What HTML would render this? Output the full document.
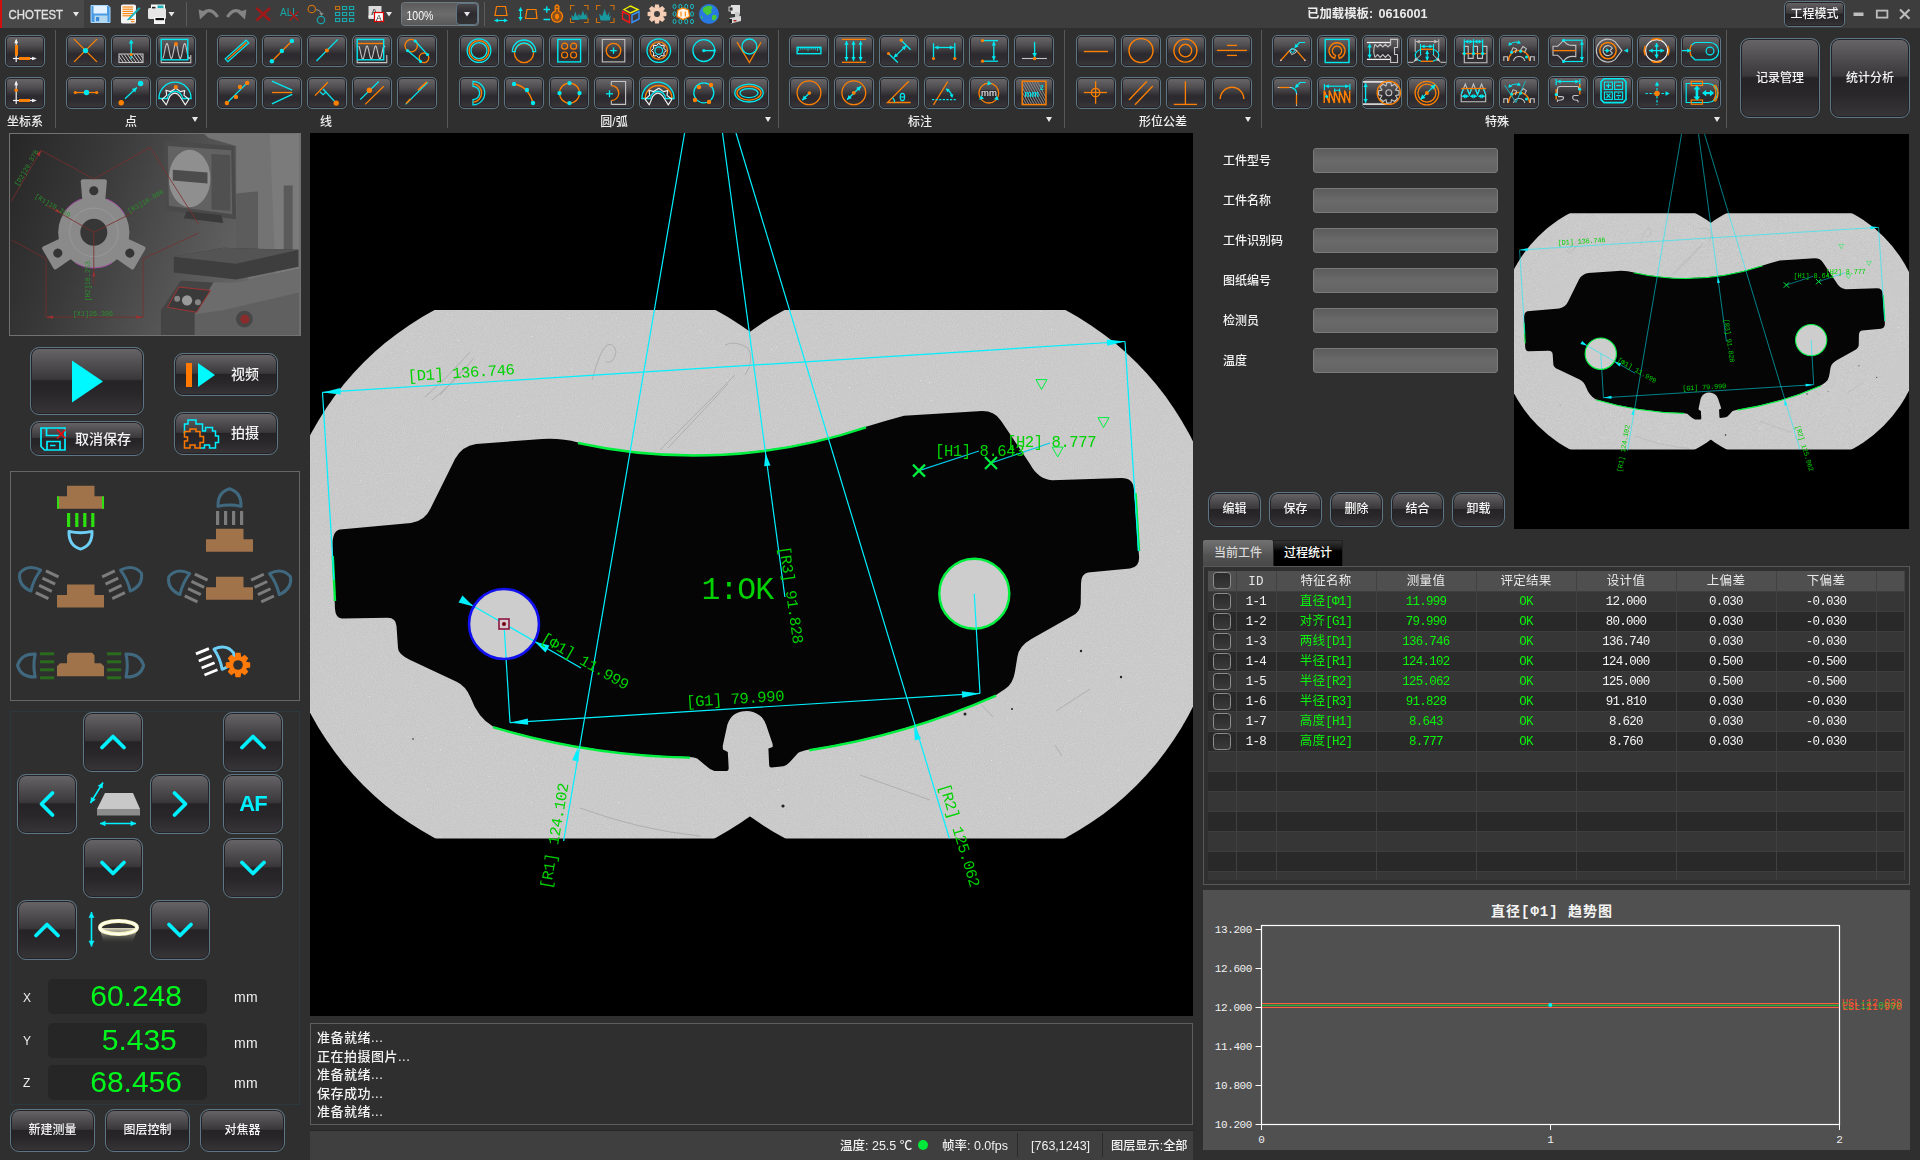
<!DOCTYPE html>
<html lang="zh"><head><meta charset="utf-8"><title>CHOTEST</title><style>
*{box-sizing:border-box}
html,body{margin:0;padding:0}
body{width:1920px;height:1160px;overflow:hidden;background:#2f2f2f;color:#eee;font-family:"Liberation Sans","Noto Sans CJK SC",sans-serif;font-size:12px;position:relative;font-weight:500}
.a{position:absolute}
#title{left:0;top:0;width:1920px;height:28px;background:#3d3d3d}
.tb{position:absolute;width:40px;height:32px;border:1px solid #5d7685;border-radius:5px;background:linear-gradient(#6a686a 0%,#514f51 30%,#3b393c 48%,#2c2a2e 60%,#2e2c30 75%,#3a383b 100%);box-shadow:inset 0 0 0 1px #252325}
.tb svg{position:absolute;left:-1px;top:-1px;width:40px;height:32px;overflow:visible}
.sep{position:absolute;width:1px;top:30px;height:98px;background:#585858}
.glab{position:absolute;top:114px;height:16px;line-height:16px;font-size:12px;color:#f0f0f0;text-align:center;white-space:nowrap}
.dd{position:absolute;top:117px;width:0;height:0;border-left:3px solid transparent;border-right:3px solid transparent;border-top:5px solid #e8e8e8}
.gb{position:absolute;border:1px solid #5d7685;border-radius:9px;background:linear-gradient(#676567 0%,#4a484a 30%,#3a383b 47%,#252326 50%,#29272a 70%,#373538 100%);box-shadow:inset 0 0 0 1px #242224;color:#f4f4f4;text-align:center;white-space:nowrap}
.inp{position:absolute;left:1313px;width:185px;height:25px;border:1px solid #7a7a7a;border-radius:3px;background:linear-gradient(#5c5c5c,#6a6a6a 50%,#646464)}
.flab{position:absolute;left:1223px;font-size:12px;color:#f2f2f2;height:16px;line-height:16px}
.mono{font-family:"Liberation Mono","Noto Sans Mono CJK SC","Noto Sans CJK SC",monospace}
.cb{position:absolute;left:5px;top:0.5px;width:17.5px;height:17.5px;border:1.2px solid #8c8c8c;border-radius:3.5px;background:linear-gradient(#2a2a2a,#3a3a3a)}


.th{position:absolute;top:0;height:21px;line-height:22.5px;text-align:center;font-size:12.5px;color:#e8e8e8;white-space:nowrap;letter-spacing:0.3px}
.tr{position:absolute;left:0;width:697px;height:20px;border-bottom:1px solid #3e3e3e}
.tc{position:absolute;top:0;height:20px;line-height:21px;text-align:center;font-size:12.5px;white-space:nowrap;color:#f4f4f4;letter-spacing:-0.75px}
.cj{letter-spacing:0.2px}
.g{color:#0cf20c}
</style></head><body>
<div id="title" class="a"></div>
<svg class="a" style="left:0;top:0" width="1920" height="28" viewBox="0 0 1920 28"><rect x="0" y="0" width="2" height="28" fill="#d01010"/><rect x="2" y="0" width="82" height="28" fill="#494949"/><text x="8.6" y="18.7" font-size="13.6" fill="#e0e0e0" stroke="#e0e0e0" stroke-width="0.35" font-family="Liberation Sans,Noto Sans CJK SC,sans-serif" textLength="54.5" lengthAdjust="spacingAndGlyphs">CHOTEST</text><polygon points="73,12 79,12 76.0,16.5" fill="#e8e8e8"/><g><path d="M91 5.5 H108 L110 7.5 V22.5 H91 Z" fill="#4a9ae4" stroke="#a8d8ff" stroke-width="1"/><rect x="93.5" y="6" width="13.5" height="7.5" fill="#e4f2ff"/><rect x="94.5" y="15.5" width="13" height="7" fill="#b4d8ee"/><rect x="96" y="17" width="3.2" height="4.2" fill="#3a88d8"/></g><g><path d="M121 6 Q121 4.5 123 4.5 H134 Q136 4.5 136 6 V22 Q136 23.5 134 23.5 H123 Q121 23.5 121 22 Z" fill="#f4f4f4"/><line x1="122.5" y1="7.0" x2="133" y2="7.0" stroke="#ff8000" stroke-width="1.1"/><line x1="122.5" y1="9.2" x2="133" y2="9.2" stroke="#ff8000" stroke-width="1.1"/><line x1="122.5" y1="11.4" x2="133" y2="11.4" stroke="#ff8000" stroke-width="1.1"/><line x1="122.5" y1="13.600000000000001" x2="133" y2="13.600000000000001" stroke="#ff8000" stroke-width="1.1"/><line x1="122.5" y1="15.8" x2="133" y2="15.8" stroke="#ff8000" stroke-width="1.1"/><line x1="130" y1="19.5" x2="134.5" y2="19.5" stroke="#ff8000" stroke-width="1.1"/><line x1="131" y1="21.7" x2="134.5" y2="21.7" stroke="#ff8000" stroke-width="1.1"/><path d="M139 7.5 L128.5 18.5 L127.5 20 L129.5 19.3 L140 8.5 Z" fill="#10c0c8" stroke="#10a8b0" stroke-width="0.8"/></g><g><rect x="151" y="4.5" width="14" height="6" fill="#fafafa"/><rect x="148" y="8" width="18" height="11" rx="1.5" fill="#e6e6e6"/><rect x="157.5" y="5.5" width="6" height="2.6" fill="#18b0b8"/><rect x="152" y="6.8" width="3.5" height="1.6" fill="#222"/><rect x="154" y="17" width="11" height="7" fill="#f4f4f4"/><rect x="155.5" y="18" width="8.5" height="2.2" fill="#111"/></g><polygon points="168.5,12 174.5,12 171.5,16.5" fill="#e8e8e8"/><rect x="186" y="2" width="1" height="24" fill="#5c5c5c"/><g fill="none" stroke="#848484" stroke-width="3.2"><path d="M217.6 17 Q211 6.5 202.5 13.5"/><path d="M227.4 17 Q234 6.5 242.5 13.5"/></g><polygon points="198.6,9.6 207.6,12.6 200,19.4" fill="#848484"/><polygon points="246.4,9.6 237.4,12.6 245,19.4" fill="#848484"/><path d="M256.5 8 L270 20.5 M270 8 L256.5 20.5" stroke="#a01818" stroke-width="2.6" fill="none"/><text x="280" y="15.5" font-size="11" fill="#18a8a8" font-family="Liberation Sans,Noto Sans CJK SC,sans-serif" textLength="18" lengthAdjust="spacingAndGlyphs">ALL</text><path d="M289.5 11.5 L298.5 20.5 M298.5 11.5 L289.5 20.5" stroke="#b01818" stroke-width="1.3"/><circle cx="311.8" cy="9" r="3.7" fill="none" stroke="#c87010" stroke-width="1.2"/><circle cx="321" cy="20" r="3.7" fill="none" stroke="#18a8b0" stroke-width="1.2"/><path d="M316 9.5 Q321 10.5 321.5 14.5" fill="none" stroke="#8a8a8a" stroke-width="1.1"/><polygon points="319.3,13 323.6,13 321.5,16" fill="#8a8a8a"/><rect x="335.5" y="6.5" width="4.2" height="3" fill="none" stroke="#c87010" stroke-width="1.1"/><rect x="342.5" y="6.5" width="4.2" height="3" fill="none" stroke="#18a8b0" stroke-width="1.1"/><rect x="349.5" y="6.5" width="4.2" height="3" fill="none" stroke="#18a8b0" stroke-width="1.1"/><rect x="335.5" y="12.5" width="4.2" height="3" fill="none" stroke="#18a8b0" stroke-width="1.1"/><rect x="342.5" y="12.5" width="4.2" height="3" fill="none" stroke="#18a8b0" stroke-width="1.1"/><rect x="349.5" y="12.5" width="4.2" height="3" fill="none" stroke="#18a8b0" stroke-width="1.1"/><rect x="335.5" y="18.5" width="4.2" height="3" fill="none" stroke="#18a8b0" stroke-width="1.1"/><rect x="342.5" y="18.5" width="4.2" height="3" fill="none" stroke="#18a8b0" stroke-width="1.1"/><rect x="349.5" y="18.5" width="4.2" height="3" fill="none" stroke="#18a8b0" stroke-width="1.1"/><rect x="368.5" y="6" width="13" height="13" fill="#dcdcdc"/><text x="371" y="14.5" font-size="9" fill="#555" font-family="Liberation Sans,Noto Sans CJK SC,sans-serif" font-weight="bold">A</text><rect x="368.5" y="15.5" width="13" height="2" fill="#f4f4f4"/><rect x="374.5" y="12.5" width="9" height="9" fill="#fff" stroke="#e00000" stroke-width="1.2"/><text x="376" y="20.6" font-size="8.5" fill="#222" font-family="Liberation Sans,Noto Sans CJK SC,sans-serif">A</text><polygon points="386,12 392,12 389.0,16.5" fill="#e8e8e8"/><defs><linearGradient id="cbg" x1="0" y1="0" x2="0" y2="1"><stop offset="0" stop-color="#5a5a5a"/><stop offset="0.5" stop-color="#6c6c6c"/><stop offset="1" stop-color="#585858"/></linearGradient><linearGradient id="cbd" x1="0" y1="0" x2="0" y2="1"><stop offset="0" stop-color="#4a484a"/><stop offset="0.5" stop-color="#2c2a2e"/><stop offset="1" stop-color="#333"/></linearGradient></defs><rect x="401.5" y="2.5" width="77" height="23" rx="3" fill="url(#cbg)" stroke="#707c84" stroke-width="1"/><rect x="456.5" y="3.5" width="21" height="21" rx="3" fill="url(#cbd)" stroke="#5d7685" stroke-width="1"/><text x="406.5" y="19.6" font-size="13" fill="#fafafa" font-family="Liberation Sans,Noto Sans CJK SC,sans-serif" textLength="27" lengthAdjust="spacingAndGlyphs">100%</text><polygon points="464,12 470,12 467.0,16.5" fill="#e8e8e8"/><rect x="484" y="2" width="1" height="24" fill="#5c5c5c"/><path d="M496.5 6.5 H505.5 L507 15.5 H495 Z" fill="none" stroke="#ff8000" stroke-width="1.2"/><line x1="494.6" y1="20.5" x2="507.4" y2="20.5" stroke="#00e8f0" stroke-width="1.2" /><polygon points="507.40,20.50 504.10,22.45 504.10,18.55" fill="#00e8f0"/><polygon points="494.60,20.50 497.90,18.55 497.90,22.45" fill="#00e8f0"/><line x1="520.5" y1="7.5" x2="520.5" y2="20.5" stroke="#00e8f0" stroke-width="1.3" /><polygon points="520.50,20.50 518.30,16.96 522.70,16.96" fill="#00e8f0"/><polygon points="520.50,7.50 522.70,11.04 518.30,11.04" fill="#00e8f0"/><path d="M527 9.5 H536 L537 18.5 H525.5 Z" fill="none" stroke="#ff8000" stroke-width="1.2"/><path d="M543.5 9.5 H550 M546.8 6.3 V12.7 M543.5 19.5 H550" stroke="#00e8f0" stroke-width="1.3" fill="none"/><path d="M555.2 11.2 V6.4 Q557 3.6 558.8 6.4 V11.2 A5.6 5.6 0 1 1 555.2 11.2 Z" fill="#c86008" fill-opacity="0.55" stroke="#ff8000" stroke-width="1.3"/><ellipse cx="557" cy="16.6" rx="2" ry="2.8" fill="#ff8000"/><path d="M555.4 8.6 H558.6" stroke="#ff8000" stroke-width="1"/><path d="M574.5 5.5 H570.5 V10 M570.5 18 V22.5 H574.5 M584 5.5 H588 V10 M588 18 V22.5 H584" fill="none" stroke="#c87010" stroke-width="1.1"/><path d="M572.1560000000001 20 L571.172 14.916 L573.4680000000001 16.884 L575.272 11.39 L577.076 16.392 L579.044 13.440000000000001 L578.552 17.54 L580.192 15.9 L579.208 20 Z" fill="#1a98a0"/><path d="M579.7560000000001 19.2 L578.772 14.116 L581.0680000000001 16.084 L582.8720000000001 10.59 L584.676 15.591999999999999 L586.644 12.64 L586.152 16.74 L587.792 15.1 L586.808 19.2 Z" fill="#1a98a0"/><path d="M600.5 5.5 H596.5 V10 M596.5 18 V22.5 H600.5 M610 5.5 H614 V10 M614 18 V22.5 H610" fill="none" stroke="#c87010" stroke-width="1.1"/><path d="M600.464 20.4 L599.168 13.703999999999997 L602.192 16.296 L604.568 9.059999999999999 L606.944 15.647999999999998 L609.536 11.759999999999998 L608.888 17.159999999999997 L611.048 14.999999999999998 L609.752 20.4 Z" fill="#1a98a0"/><g fill="none" stroke-width="1.4"><path d="M624 9.5 L630.5 6 L638 9.5 L630.5 13 Z" stroke="#f0f000"/><path d="M622.5 11.5 L629.5 15 V22.5 L622.5 19 Z" stroke="#f01818"/><path d="M639 11.5 L632 15 V22.5 L639 19 Z" stroke="#3890f8"/></g><polygon points="663.3,11.5 666.4,12.1 666.4,15.9 663.3,16.5 663.2,16.7 665.0,19.3 662.3,22.0 659.7,20.2 659.5,20.3 658.9,23.4 655.1,23.4 654.5,20.3 654.3,20.2 651.7,22.0 649.0,19.3 650.8,16.7 650.7,16.5 647.6,15.9 647.6,12.1 650.7,11.5 650.8,11.3 649.0,8.7 651.7,6.0 654.3,7.8 654.5,7.7 655.1,4.6 658.9,4.6 659.5,7.7 659.7,7.8 662.3,6.0 665.0,8.7 663.2,11.3" fill="#f4cdb4" stroke="#f8c8a8" stroke-width="0" stroke-linejoin="round"/><circle cx="657" cy="14" r="3" fill="#3d3d3d"/><ellipse cx="674.5" cy="6.5" rx="1.5" ry="2.2" fill="none" stroke="#18c8d0" stroke-width="0.9"/><ellipse cx="680.3" cy="6.5" rx="1.5" ry="2.2" fill="none" stroke="#18c8d0" stroke-width="0.9"/><ellipse cx="686.2" cy="6.5" rx="1.5" ry="2.2" fill="none" stroke="#18c8d0" stroke-width="0.9"/><ellipse cx="692" cy="6.5" rx="1.5" ry="2.2" fill="none" stroke="#18c8d0" stroke-width="0.9"/><ellipse cx="674.5" cy="14" rx="1.5" ry="2.2" fill="none" stroke="#18c8d0" stroke-width="0.9"/><ellipse cx="680.3" cy="14" rx="1.5" ry="2.2" fill="none" stroke="#18c8d0" stroke-width="0.9"/><ellipse cx="686.2" cy="14" rx="1.5" ry="2.2" fill="none" stroke="#18c8d0" stroke-width="0.9"/><ellipse cx="692" cy="14" rx="1.5" ry="2.2" fill="none" stroke="#18c8d0" stroke-width="0.9"/><ellipse cx="674.5" cy="21.5" rx="1.5" ry="2.2" fill="none" stroke="#18c8d0" stroke-width="0.9"/><ellipse cx="680.3" cy="21.5" rx="1.5" ry="2.2" fill="none" stroke="#18c8d0" stroke-width="0.9"/><ellipse cx="686.2" cy="21.5" rx="1.5" ry="2.2" fill="none" stroke="#18c8d0" stroke-width="0.9"/><ellipse cx="692" cy="21.5" rx="1.5" ry="2.2" fill="none" stroke="#18c8d0" stroke-width="0.9"/><polygon points="683,8 688.5,10 689.5,16.5 683,19.5 677,16.5 678,10" fill="#fff4e8" stroke="#ff8000" stroke-width="1.2"/><path d="M681 11.5 V16.5 M685.3 11.5 V16.5" stroke="#ff8000" stroke-width="1.1"/><circle cx="709" cy="14" r="10" fill="#2878e0"/><path d="M703 8 Q707 5 711 6 Q714 8 711 10 Q713 13 709.5 14 Q707 17 705 13 Q702 12 703 8 Z M713 15 Q717 14 716.5 18 Q715 21.5 712.5 20 Q711 17 713 15 Z M701 15 Q703 17 702.5 19.5 Q700.5 18 701 15 Z" fill="#48c838"/><g><rect x="731" y="5" width="9" height="9" fill="#e0e0e0"/><rect x="729" y="7" width="4" height="4" fill="#333" stroke="#eee" stroke-width="0.8"/><rect x="735" y="12" width="4.5" height="5" fill="#c8c8c8"/><path d="M729.5 18 L741 16 V21 L731 23.5 Z" fill="#d8d8d8"/><rect x="733.5" y="20" width="3" height="1.4" fill="#b02020"/><rect x="729" y="19" width="3" height="4" fill="#2a2a2a"/></g><text x="1307" y="17.8" font-size="12.4" font-weight="bold" fill="#ececec" font-family="Liberation Sans,Noto Sans CJK SC,sans-serif">已加载模板:</text><text x="1378.5" y="17.8" font-size="12.6" font-weight="bold" fill="#ececec" font-family="Liberation Sans,Noto Sans CJK SC,sans-serif">0616001</text><rect x="1853.5" y="12.5" width="10" height="3.5" fill="#bdbdbd"/><rect x="1876.8" y="10.6" width="10.6" height="7" fill="none" stroke="#bdbdbd" stroke-width="1.8"/><path d="M1900 9.5 L1909.5 18.8 M1909.5 9.5 L1900 18.8" stroke="#bdbdbd" stroke-width="2"/></svg><div class="gb" style="left:1784px;top:1px;width:61px;height:26px;line-height:24px;font-size:12px;border-radius:5px">工程模式</div>
<div class="tb" style="left:5px;top:35px"><svg viewBox="0 0 40 32"><line x1="11.2" y1="5" x2="11.2" y2="27" stroke="#f2f2f2" stroke-width="1.2" /><polygon points="11.20,3.50 13.03,8.22 9.37,8.22" fill="#f2f2f2"/><line x1="8" y1="23.5" x2="30" y2="23.5" stroke="#f2f2f2" stroke-width="1.2" /><polygon points="31.80,23.50 27.08,25.33 27.08,21.67" fill="#f2f2f2"/><rect x="10" y="10" width="3" height="10.6" fill="#ff8000" stroke="#ff8000" stroke-width="0"/><rect x="14" y="22" width="11" height="3" fill="#ff8000" stroke="#ff8000" stroke-width="0"/></svg></div>
<div class="tb" style="left:5px;top:77px"><svg viewBox="0 0 40 32"><line x1="11.2" y1="5" x2="11.2" y2="27" stroke="#f2f2f2" stroke-width="1.2" /><polygon points="11.20,3.50 13.03,8.22 9.37,8.22" fill="#f2f2f2"/><line x1="8" y1="23.5" x2="30" y2="23.5" stroke="#f2f2f2" stroke-width="1.2" /><polygon points="31.80,23.50 27.08,25.33 27.08,21.67" fill="#f2f2f2"/><circle cx="11.2" cy="13.2" r="1.8" fill="#ff8000"/><rect x="14" y="22" width="11" height="3" fill="#ff8000" stroke="#ff8000" stroke-width="0"/></svg></div>
<div class="tb" style="left:66px;top:35px"><svg viewBox="0 0 40 32"><line x1="8.1" y1="4.1" x2="30.9" y2="26.9" stroke="#ff8000" stroke-width="1.3" /><line x1="8.1" y1="26.9" x2="30.9" y2="4.1" stroke="#ff8000" stroke-width="1.3" /><circle cx="19.5" cy="15.6" r="2.7" fill="#00e8f0"/></svg></div>
<div class="tb" style="left:66px;top:77px"><svg viewBox="0 0 40 32"><line x1="9" y1="15.5" x2="31" y2="15.5" stroke="#ff8000" stroke-width="1.3" /><circle cx="9.3" cy="15.5" r="1.6" fill="#ff8000"/><circle cx="30.7" cy="15.5" r="1.6" fill="#ff8000"/><circle cx="20.5" cy="15.5" r="2.7" fill="#00e8f0"/></svg></div>
<div class="tb" style="left:111px;top:35px"><svg viewBox="0 0 40 32"><clipPath id="hc"><rect x="8" y="19" width="24" height="8.5"/></clipPath><g clip-path="url(#hc)"><line x1="12.2" y1="27.2" x2="6.699999999999999" y2="19.3" stroke="#c4c4c4" stroke-width="1" /><line x1="15.4" y1="27.2" x2="9.9" y2="19.3" stroke="#c4c4c4" stroke-width="1" /><line x1="18.6" y1="27.2" x2="13.100000000000001" y2="19.3" stroke="#c4c4c4" stroke-width="1" /><line x1="21.8" y1="27.2" x2="16.3" y2="19.3" stroke="#c4c4c4" stroke-width="1" /><line x1="25.0" y1="27.2" x2="19.5" y2="19.3" stroke="#c4c4c4" stroke-width="1" /><line x1="28.200000000000003" y1="27.2" x2="22.700000000000003" y2="19.3" stroke="#c4c4c4" stroke-width="1" /><line x1="31.400000000000002" y1="27.2" x2="25.900000000000002" y2="19.3" stroke="#c4c4c4" stroke-width="1" /><line x1="34.6" y1="27.2" x2="29.1" y2="19.3" stroke="#c4c4c4" stroke-width="1" /></g><rect x="8" y="19" width="24" height="8.5" fill="none" stroke="#c4c4c4" stroke-width="1.1"/><line x1="20.2" y1="23.8" x2="20.2" y2="7" stroke="#00e8f0" stroke-width="1.3" /><polygon points="20.20,4.20 22.52,8.45 17.88,8.45" fill="#00e8f0"/><circle cx="20.2" cy="19.4" r="1.5" fill="#ff8000"/></svg></div>
<div class="tb" style="left:111px;top:77px"><svg viewBox="0 0 40 32"><circle cx="10.2" cy="25.8" r="2.7" fill="#ff8000"/><circle cx="29.6" cy="6.5" r="2.7" fill="#00e8f0"/><line x1="14" y1="21.8" x2="25.9" y2="10.5" stroke="#00e8f0" stroke-width="1.3" /><polygon points="25.90,10.50 24.16,15.52 20.80,11.98" fill="#00e8f0"/></svg></div>
<div class="tb" style="left:156px;top:35px"><svg viewBox="0 0 40 32"><path d="M5.2 25 V27.6 H34.8 V20" fill="none" stroke="#c4c4c4" stroke-width="1.1" /><polyline points="6.5,23.5 7.0,23.1 7.4,22.0 7.9,20.2 8.3,18.0 8.8,15.6 9.2,13.2 9.7,11.2 10.2,9.6 10.6,8.7 11.1,8.5 11.5,9.2 12.0,10.5 12.5,12.5 12.9,14.7 13.4,17.2 13.8,19.5 14.3,21.4 14.8,22.8 15.2,23.5 15.7,23.3 16.1,22.5 16.6,20.9 17.0,18.8 17.5,16.5 18.0,14.1 18.4,11.8 18.9,10.1 19.3,8.9 19.8,8.5 20.2,8.9 20.7,10.0 21.2,11.7 21.6,13.9 22.1,16.3 22.5,18.7 23.0,20.8 23.5,22.4 23.9,23.3 24.4,23.5 24.8,22.9 25.3,21.5 25.8,19.6 26.2,17.3 26.7,14.9 27.1,12.6 27.6,10.6 28.0,9.2 28.5,8.6 29.0,8.6 29.4,9.5 29.9,11.0 30.3,13.1 30.8,15.5 31.2,17.9 31.7,20.1 32.2,21.9 32.6,23.1 33.1,23.5 33.5,23.2 34.0,22.1" fill="none" stroke="#c4c4c4" stroke-width="1.1"/><rect x="5.2" y="4.4" width="26.6" height="20.4" fill="none" stroke="#00e8f0" stroke-width="1.4"/><circle cx="20" cy="9" r="1.9" fill="#ff8000"/></svg></div>
<div class="tb" style="left:156px;top:77px"><svg viewBox="0 0 40 32"><g transform="translate(0 0)"><path d="M2.9 21.5 A16.1 16.3 0 0 1 35.1 21.5 H26.7 A7.8 8.6 0 0 0 11.3 21.5 Z" fill="none" stroke="#00e8f0" stroke-width="1.3" /></g><g transform="translate(0 0)"><path d="M10.3 27.9 L13.6 19.7 Q18.85 12.6 24.1 19.7 L29.3 27.9 L32.9 22.3 L28 18.4 L28.7 13.5 L24.6 14.6 L19.8 11.2 L14.6 14.6 L10 13.2 L10.7 18.1 L6.1 22.3 Z" fill="none" stroke="#f2f2f2" stroke-width="1.15" stroke-linejoin="round"/></g><circle cx="19.8" cy="10" r="2.1" fill="#ff8000"/></svg></div>
<div class="tb" style="left:217px;top:35px"><svg viewBox="0 0 40 32"><path d="M10.8 26.7 L31.8 8.0 L29.2 5.2 L8.2 23.9 Z" fill="none" stroke="#00e8f0" stroke-width="1.2" /><line x1="10.5" y1="24.4" x2="29.5" y2="7.5" stroke="#ff8000" stroke-width="1.2" /></svg></div>
<div class="tb" style="left:217px;top:77px"><svg viewBox="0 0 40 32"><line x1="9.9" y1="26" x2="30.2" y2="5.9" stroke="#00e8f0" stroke-width="1.3" /><circle cx="9.9" cy="26" r="2.2" fill="#ff8000"/><circle cx="30.2" cy="5.9" r="2.2" fill="#ff8000"/><circle cx="23" cy="9.9" r="2.2" fill="#ff8000"/><circle cx="19" cy="19.9" r="2.2" fill="#ff8000"/></svg></div>
<div class="tb" style="left:262px;top:35px"><svg viewBox="0 0 40 32"><line x1="9.9" y1="26.2" x2="29.9" y2="6" stroke="#ff8000" stroke-width="1.3" /><circle cx="9.9" cy="26.2" r="2.2" fill="#00e8f0"/><circle cx="29.9" cy="6" r="2.2" fill="#00e8f0"/><circle cx="19.9" cy="16" r="2.2" fill="#00e8f0"/></svg></div>
<div class="tb" style="left:262px;top:77px"><svg viewBox="0 0 40 32"><line x1="9.9" y1="4.2" x2="30.2" y2="13.2" stroke="#00e8f0" stroke-width="1.3" /><line x1="9.9" y1="26.8" x2="30.2" y2="17.4" stroke="#00e8f0" stroke-width="1.3" /><line x1="9.9" y1="15.5" x2="30.2" y2="15.5" stroke="#ff8000" stroke-width="1.3" /></svg></div>
<div class="tb" style="left:307px;top:35px"><svg viewBox="0 0 40 32"><line x1="9.5" y1="26" x2="30.8" y2="4.4" stroke="#00e8f0" stroke-width="1.3" /><circle cx="19.9" cy="15.6" r="2" fill="#ff8000"/></svg></div>
<div class="tb" style="left:307px;top:77px"><svg viewBox="0 0 40 32"><line x1="8" y1="18.6" x2="20.8" y2="5.2" stroke="#ff8000" stroke-width="1.3" /><line x1="16.1" y1="12" x2="29.2" y2="26.1" stroke="#00e8f0" stroke-width="1.3" /><circle cx="29.2" cy="26.1" r="2.7" fill="#ff8000"/><path d="M13 14.9 L16.1 17.8 L19 15.1" fill="none" stroke="#00e8f0" stroke-width="1.2" /></svg></div>
<div class="tb" style="left:352px;top:35px"><svg viewBox="0 0 40 32"><path d="M5.2 25 V27.6 H34.8 V20" fill="none" stroke="#c4c4c4" stroke-width="1.1" /><polyline points="6.5,11.0 6.9,11.3 7.4,12.3 7.8,13.8 8.3,15.8 8.7,17.8 9.2,19.9 9.6,21.7 10.0,23.1 10.5,23.8 10.9,24.0 11.4,23.4 11.8,22.2 12.2,20.6 12.7,18.6 13.1,16.5 13.6,14.5 14.0,12.8 14.4,11.6 14.9,11.0 15.3,11.1 15.8,11.9 16.2,13.3 16.7,15.0 17.1,17.1 17.5,19.2 18.0,21.1 18.4,22.6 18.9,23.6 19.3,24.0 19.8,23.7 20.2,22.7 20.6,21.2 21.1,19.3 21.5,17.2 22.0,15.2 22.4,13.4 22.8,12.0 23.3,11.2 23.7,11.0 24.2,11.6 24.6,12.7 25.0,14.4 25.5,16.3 25.9,18.4 26.4,20.5 26.8,22.1 27.3,23.4 27.7,23.9 28.1,23.9 28.6,23.1 29.0,21.8 29.5,20.0 29.9,18.0 30.4,15.9 30.8,14.0 31.2,12.4 31.7,11.4 32.1,11.0 32.6,11.3 33.0,12.2" fill="none" stroke="#c4c4c4" stroke-width="1.1"/><rect x="5.2" y="4.4" width="26.5" height="20.4" fill="none" stroke="#00e8f0" stroke-width="1.4"/><line x1="6" y1="8.5" x2="31" y2="8.5" stroke="#ff8000" stroke-width="1.3" /></svg></div>
<div class="tb" style="left:352px;top:77px"><svg viewBox="0 0 40 32"><line x1="8.2" y1="22.6" x2="26.8" y2="4.5" stroke="#00e8f0" stroke-width="1.3" /><line x1="13.2" y1="27.4" x2="31.8" y2="9.2" stroke="#ff8000" stroke-width="1.3" /><circle cx="17.4" cy="13.2" r="2.7" fill="#ff8000"/></svg></div>
<div class="tb" style="left:397px;top:35px"><svg viewBox="0 0 40 32"><circle cx="14.2" cy="10.6" r="6.2" fill="none" stroke="#ff8000" stroke-width="1.3"/><circle cx="27" cy="22.8" r="4.8" fill="none" stroke="#ff8000" stroke-width="1.3"/><line x1="18.2" y1="6" x2="30.5" y2="19.6" stroke="#00e8f0" stroke-width="1.3" /><line x1="10.5" y1="15.6" x2="23.6" y2="26.5" stroke="#00e8f0" stroke-width="1.3" /><circle cx="18.2" cy="6" r="1.6" fill="#00e8f0"/><circle cx="30.5" cy="19.6" r="1.6" fill="#00e8f0"/><circle cx="10.5" cy="15.6" r="1.6" fill="#00e8f0"/><circle cx="23.6" cy="26.5" r="1.6" fill="#00e8f0"/></svg></div>
<div class="tb" style="left:397px;top:77px"><svg viewBox="0 0 40 32"><line x1="8.6" y1="27.4" x2="30.8" y2="5.2" stroke="#00e8f0" stroke-width="1.3" /><line x1="9.2" y1="26.5" x2="13.6" y2="21.8" stroke="#ff8000" stroke-width="1.6" /><line x1="21" y1="13.2" x2="29.9" y2="4.9" stroke="#ff8000" stroke-width="1.6" /></svg></div>
<div class="tb" style="left:459px;top:35px"><svg viewBox="0 0 40 32"><circle cx="20" cy="15.6" r="11.8" fill="none" stroke="#00e8f0" stroke-width="1.3"/><circle cx="20" cy="15.6" r="9.9" fill="none" stroke="#ff8000" stroke-width="1.3"/><circle cx="20" cy="15.6" r="8" fill="none" stroke="#00e8f0" stroke-width="1.3"/></svg></div>
<div class="tb" style="left:459px;top:77px"><svg viewBox="0 0 40 32"><path d="M14 4.3 A11.75 11.75 0 0 1 14 27.8 V22.6 A6.6 6.6 0 0 0 14 9.4 Z" fill="none" stroke="#00e8f0" stroke-width="1.3" /><path d="M14.3 6.9 A9.2 9.2 0 0 1 14.3 25.2" fill="none" stroke="#ff8000" stroke-width="1.3" /></svg></div>
<div class="tb" style="left:504px;top:35px"><svg viewBox="0 0 40 32"><circle cx="20" cy="18" r="9.6" fill="none" stroke="#ff8000" stroke-width="1.3"/><path d="M8.3 16.7 A11.7 11.7 0 0 1 31.7 16.7 H28.7 A8.7 8.7 0 0 0 11.3 16.7 Z" fill="none" stroke="#00e8f0" stroke-width="1.3" /></svg></div>
<div class="tb" style="left:504px;top:77px"><svg viewBox="0 0 40 32"><path d="M10 7 Q24 9 29 26" fill="none" stroke="#ff8000" stroke-width="1.3" /><circle cx="10" cy="7" r="2.2" fill="#00e8f0"/><circle cx="22.9" cy="13" r="2.2" fill="#00e8f0"/><circle cx="29" cy="26" r="2.2" fill="#00e8f0"/></svg></div>
<div class="tb" style="left:549px;top:35px"><svg viewBox="0 0 40 32"><rect x="8.8" y="4.4" width="22.8" height="22.5" fill="none" stroke="#00e8f0" stroke-width="1.4"/><circle cx="15.6" cy="11.2" r="3" fill="none" stroke="#ff8000" stroke-width="1.2"/><circle cx="24.6" cy="11.2" r="3" fill="none" stroke="#ff8000" stroke-width="1.2"/><circle cx="15.6" cy="20" r="3" fill="none" stroke="#ff8000" stroke-width="1.2"/><circle cx="24.6" cy="20" r="3" fill="none" stroke="#ff8000" stroke-width="1.2"/></svg></div>
<div class="tb" style="left:549px;top:77px"><svg viewBox="0 0 40 32"><circle cx="20.5" cy="16.1" r="10" fill="none" stroke="#ff8000" stroke-width="1.3"/><circle cx="20.5" cy="6.1" r="2.2" fill="#00e8f0"/><circle cx="20.5" cy="26.1" r="2.2" fill="#00e8f0"/><circle cx="10.5" cy="16.1" r="2.2" fill="#00e8f0"/><circle cx="30.5" cy="16.1" r="2.2" fill="#00e8f0"/></svg></div>
<div class="tb" style="left:594px;top:35px"><svg viewBox="0 0 40 32"><rect x="8.3" y="4.4" width="22.5" height="22.5" fill="none" stroke="#c4c4c4" stroke-width="1.1"/><circle cx="19.5" cy="15.6" r="7.3" fill="none" stroke="#ff8000" stroke-width="1.3"/><line x1="16.3" y1="15.6" x2="22.7" y2="15.6" stroke="#00e8f0" stroke-width="1.3" /><line x1="19.5" y1="12.4" x2="19.5" y2="18.8" stroke="#00e8f0" stroke-width="1.3" /></svg></div>
<div class="tb" style="left:594px;top:77px"><svg viewBox="0 0 40 32"><path d="M17.3 4.5 H31.6 V27.4 H17.3" fill="none" stroke="#c4c4c4" stroke-width="1.1" /><line x1="17.3" y1="4.5" x2="17.3" y2="8.6" stroke="#c4c4c4" stroke-width="1.1" /><line x1="17.3" y1="23.6" x2="17.3" y2="27.4" stroke="#c4c4c4" stroke-width="1.1" /><path d="M17.3 8.6 A7.5 7.5 0 0 1 17.3 23.6" fill="none" stroke="#ff8000" stroke-width="1.3" /><line x1="12" y1="16.8" x2="19" y2="16.8" stroke="#00e8f0" stroke-width="1.3" /><line x1="15.5" y1="13.3" x2="15.5" y2="20.3" stroke="#00e8f0" stroke-width="1.3" /></svg></div>
<div class="tb" style="left:639px;top:35px"><svg viewBox="0 0 40 32"><circle cx="19.8" cy="15.6" r="11.8" fill="none" stroke="#00e8f0" stroke-width="1.3"/><circle cx="19.8" cy="15.6" r="8.7" fill="none" stroke="#ff8000" stroke-width="1.3"/><polygon points="19.8,8.0 21.9,10.6 25.2,10.2 24.8,13.5 27.4,15.6 24.8,17.7 25.2,21.0 21.9,20.6 19.8,23.2 17.7,20.6 14.4,21.0 14.8,17.7 12.2,15.6 14.8,13.5 14.4,10.2 17.7,10.6" fill="none" stroke="#f2f2f2" stroke-width="1.0"/><circle cx="19.8" cy="15.6" r="3.8" fill="none" stroke="#00e8f0" stroke-width="1.2"/></svg></div>
<div class="tb" style="left:639px;top:77px"><svg viewBox="0 0 40 32"><g transform="translate(0 0)"><path d="M2.9 21.5 A16.1 16.3 0 0 1 35.1 21.5 H26.7 A7.8 8.6 0 0 0 11.3 21.5 Z" fill="none" stroke="#00e8f0" stroke-width="1.3" /></g><path d="M6.3 21 A13.2 12.4 0 0 1 32.9 21" fill="none" stroke="#ff8000" stroke-width="1.4" /><g transform="translate(0 0)"><path d="M10.3 27.9 L13.6 19.7 Q18.85 12.6 24.1 19.7 L29.3 27.9 L32.9 22.3 L28 18.4 L28.7 13.5 L24.6 14.6 L19.8 11.2 L14.6 14.6 L10 13.2 L10.7 18.1 L6.1 22.3 Z" fill="none" stroke="#f2f2f2" stroke-width="1.15" stroke-linejoin="round"/></g></svg></div>
<div class="tb" style="left:684px;top:35px"><svg viewBox="0 0 40 32"><circle cx="19.8" cy="15.6" r="10.9" fill="none" stroke="#00e8f0" stroke-width="1.3"/><line x1="19.8" y1="15.6" x2="30.6" y2="15.6" stroke="#00e8f0" stroke-width="1.4" /><circle cx="19.8" cy="15.6" r="1.6" fill="#00e8f0"/><circle cx="30.4" cy="15.6" r="1.4" fill="#00e8f0"/></svg></div>
<div class="tb" style="left:684px;top:77px"><svg viewBox="0 0 40 32"><circle cx="19.8" cy="15.8" r="10" fill="none" stroke="#00e8f0" stroke-width="1.3"/><circle cx="15" cy="10.1" r="2.2" fill="#ff8000"/><circle cx="27" cy="8" r="2.2" fill="#ff8000"/><circle cx="11" cy="23" r="2.2" fill="#ff8000"/><circle cx="25" cy="24.9" r="2.2" fill="#ff8000"/></svg></div>
<div class="tb" style="left:729px;top:35px"><svg viewBox="0 0 40 32"><path d="M8 7.2 L20.4 27.5 L32 7.2" fill="none" stroke="#ff8000" stroke-width="1.3" /><circle cx="20.4" cy="11.5" r="7.5" fill="none" stroke="#00e8f0" stroke-width="1.3"/></svg></div>
<div class="tb" style="left:729px;top:77px"><svg viewBox="0 0 40 32"><ellipse cx="20" cy="16.1" rx="14.2" ry="8.9" fill="none" stroke="#00e8f0" stroke-width="1.3"/><ellipse cx="20" cy="16.1" rx="12" ry="7" fill="none" stroke="#ff8000" stroke-width="1.3"/><ellipse cx="20" cy="16.1" rx="9" ry="4.5" fill="none" stroke="#00e8f0" stroke-width="1.3"/></svg></div>
<div class="tb" style="left:789px;top:35px"><svg viewBox="0 0 40 32"><rect x="8.1" y="12.3" width="23.8" height="6.4" fill="none" stroke="#00e8f0" stroke-width="1.4"/><line x1="9.5" y1="12.3" x2="9.5" y2="16" stroke="#00e8f0" stroke-width="0.8" /><line x1="11.4" y1="12.3" x2="11.4" y2="14.6" stroke="#00e8f0" stroke-width="0.8" /><line x1="13.3" y1="12.3" x2="13.3" y2="14.6" stroke="#00e8f0" stroke-width="0.8" /><line x1="15.2" y1="12.3" x2="15.2" y2="14.6" stroke="#00e8f0" stroke-width="0.8" /><line x1="17.1" y1="12.3" x2="17.1" y2="14.6" stroke="#00e8f0" stroke-width="0.8" /><line x1="19.0" y1="12.3" x2="19.0" y2="16" stroke="#00e8f0" stroke-width="0.8" /><line x1="20.9" y1="12.3" x2="20.9" y2="14.6" stroke="#00e8f0" stroke-width="0.8" /><line x1="22.799999999999997" y1="12.3" x2="22.799999999999997" y2="14.6" stroke="#00e8f0" stroke-width="0.8" /><line x1="24.7" y1="12.3" x2="24.7" y2="14.6" stroke="#00e8f0" stroke-width="0.8" /><line x1="26.599999999999998" y1="12.3" x2="26.599999999999998" y2="14.6" stroke="#00e8f0" stroke-width="0.8" /><line x1="28.5" y1="12.3" x2="28.5" y2="16" stroke="#00e8f0" stroke-width="0.8" /><line x1="30.4" y1="12.3" x2="30.4" y2="14.6" stroke="#00e8f0" stroke-width="0.8" /></svg></div>
<div class="tb" style="left:789px;top:77px"><svg viewBox="0 0 40 32"><circle cx="20" cy="15.8" r="11.9" fill="none" stroke="#ff8000" stroke-width="1.3"/><line x1="20.4" y1="16" x2="13.2" y2="23.3" stroke="#00e8f0" stroke-width="1.3" /><polygon points="13.20,23.30 14.70,18.48 18.00,21.74" fill="#00e8f0"/><circle cx="20.4" cy="16" r="1.8" fill="#ff8000"/></svg></div>
<div class="tb" style="left:834px;top:35px"><svg viewBox="0 0 40 32"><line x1="7.9" y1="4.4" x2="32" y2="4.4" stroke="#ff8000" stroke-width="1.3" /><line x1="7.9" y1="27.3" x2="32" y2="27.3" stroke="#ff8000" stroke-width="1.3" /><line x1="12.5" y1="6" x2="12.5" y2="25.8" stroke="#00e8f0" stroke-width="1.3" /><polygon points="12.50,25.80 10.43,22.02 14.57,22.02" fill="#00e8f0"/><polygon points="12.50,6.00 14.57,9.78 10.43,9.78" fill="#00e8f0"/><line x1="19.5" y1="6" x2="19.5" y2="25.8" stroke="#00e8f0" stroke-width="1.3" /><polygon points="19.50,25.80 17.43,22.02 21.57,22.02" fill="#00e8f0"/><polygon points="19.50,6.00 21.57,9.78 17.43,9.78" fill="#00e8f0"/><line x1="26.6" y1="6" x2="26.6" y2="25.8" stroke="#00e8f0" stroke-width="1.3" /><polygon points="26.60,25.80 24.53,22.02 28.67,22.02" fill="#00e8f0"/><polygon points="26.60,6.00 28.67,9.78 24.53,9.78" fill="#00e8f0"/></svg></div>
<div class="tb" style="left:834px;top:77px"><svg viewBox="0 0 40 32"><circle cx="19.8" cy="15.8" r="11.9" fill="none" stroke="#ff8000" stroke-width="1.3"/><line x1="13" y1="22.8" x2="27" y2="9.2" stroke="#00e8f0" stroke-width="1.3" /><polygon points="27.00,9.20 25.40,13.99 22.17,10.66" fill="#00e8f0"/><polygon points="13.00,22.80 14.60,18.01 17.83,21.34" fill="#00e8f0"/><circle cx="19.8" cy="15.8" r="1.9" fill="#ff8000"/></svg></div>
<div class="tb" style="left:879px;top:35px"><svg viewBox="0 0 40 32"><line x1="22.2" y1="5.2" x2="31.6" y2="14.8" stroke="#00e8f0" stroke-width="1.3" /><line x1="9.5" y1="18.5" x2="18.8" y2="27.5" stroke="#00e8f0" stroke-width="1.3" /><line x1="27.2" y1="10.6" x2="14.8" y2="22.6" stroke="#00e8f0" stroke-width="1.3" /><polygon points="14.80,22.60 16.24,18.32 19.13,21.30" fill="#00e8f0"/><polygon points="27.20,10.60 25.76,14.88 22.87,11.90" fill="#00e8f0"/><circle cx="22.2" cy="5.2" r="1.6" fill="#ff8000"/><circle cx="9.5" cy="18.5" r="1.6" fill="#ff8000"/></svg></div>
<div class="tb" style="left:879px;top:77px"><svg viewBox="0 0 40 32"><path d="M29.8 4.2 L8.5 25.5 H31.6" fill="none" stroke="#ff8000" stroke-width="1.3" /><path d="M13.6 20.6 A7 7 0 0 1 15.6 25.3" fill="none" stroke="#00e8f0" stroke-width="1.2" /><ellipse cx="23.4" cy="20" rx="2.2" ry="3.6" fill="none" stroke="#00e8f0" stroke-width="1.2"/><line x1="21.2" y1="20" x2="25.6" y2="20" stroke="#00e8f0" stroke-width="1.2" /></svg></div>
<div class="tb" style="left:924px;top:35px"><svg viewBox="0 0 40 32"><line x1="9.5" y1="8.1" x2="9.5" y2="23.5" stroke="#00e8f0" stroke-width="1.3" /><line x1="30.8" y1="8.1" x2="30.8" y2="23.5" stroke="#00e8f0" stroke-width="1.3" /><line x1="10.5" y1="12.5" x2="29.8" y2="12.5" stroke="#00e8f0" stroke-width="1.3" /><polygon points="29.80,12.50 25.79,14.57 25.79,10.43" fill="#00e8f0"/><polygon points="10.50,12.50 14.51,10.43 14.51,14.57" fill="#00e8f0"/><circle cx="9.5" cy="23.5" r="1.6" fill="#ff8000"/><circle cx="30.8" cy="23.5" r="1.6" fill="#ff8000"/></svg></div>
<div class="tb" style="left:924px;top:77px"><svg viewBox="0 0 40 32"><line x1="9.5" y1="27.8" x2="23.8" y2="4.5" stroke="#ff8000" stroke-width="1.3" /><line x1="8" y1="22.6" x2="32" y2="22.6" stroke="#00e8f0" stroke-width="1.2" stroke-dasharray="2.2 1.4"/><path d="M22.6 12.4 Q27 14.5 28 19.6" fill="none" stroke="#00e8f0" stroke-width="1.2" /><polygon points="21.60,11.60 25.62,12.03 23.38,15.23" fill="#00e8f0"/><polygon points="28.20,21.00 25.66,17.85 29.51,17.17" fill="#00e8f0"/></svg></div>
<div class="tb" style="left:969px;top:35px"><svg viewBox="0 0 40 32"><line x1="13.5" y1="5.6" x2="29" y2="5.6" stroke="#00e8f0" stroke-width="1.3" /><line x1="13.5" y1="26.2" x2="29" y2="26.2" stroke="#00e8f0" stroke-width="1.3" /><line x1="24.8" y1="6.6" x2="24.8" y2="25.2" stroke="#00e8f0" stroke-width="1.3" /><polygon points="24.80,25.20 22.73,21.19 26.87,21.19" fill="#00e8f0"/><polygon points="24.80,6.60 26.87,10.61 22.73,10.61" fill="#00e8f0"/><circle cx="13.5" cy="5.6" r="1.6" fill="#ff8000"/><circle cx="13.5" cy="26.2" r="1.6" fill="#ff8000"/></svg></div>
<div class="tb" style="left:969px;top:77px"><svg viewBox="0 0 40 32"><circle cx="19.8" cy="16.1" r="9.9" fill="none" stroke="#ff8000" stroke-width="1.3"/><text x="19.9" y="18.8" font-size="9.5" text-anchor="middle" fill="#fff" stroke="#2e2c30" stroke-width="2" paint-order="stroke" font-family="Liberation Sans,sans-serif">mm</text><polygon points="22.80,6.70 18.27,8.40 18.92,3.81" fill="#00e8f0"/><polygon points="10.20,22.80 11.96,18.29 14.94,21.85" fill="#00e8f0"/><polygon points="29.80,23.20 25.06,22.25 28.04,18.69" fill="#00e8f0"/></svg></div>
<div class="tb" style="left:1014px;top:35px"><svg viewBox="0 0 40 32"><line x1="7.9" y1="23.5" x2="32.9" y2="23.5" stroke="#c4c4c4" stroke-width="1.1" /><line x1="20.6" y1="6.9" x2="20.6" y2="22.3" stroke="#00e8f0" stroke-width="1.3" /><polygon points="20.60,22.30 18.28,18.05 22.92,18.05" fill="#00e8f0"/><circle cx="20.6" cy="23.5" r="1.8" fill="#ff8000"/></svg></div>
<div class="tb" style="left:1014px;top:77px"><svg viewBox="0 0 40 32"><clipPath id="hd"><rect x="8.2" y="4.2" width="23.8" height="23.4"/></clipPath><g clip-path="url(#hd)"><g transform="translate(40,0) scale(-1,1)"><line x1="4.0" y1="27.6" x2="17.0" y2="4.2" stroke="#8a8a8a" stroke-width="1" /><line x1="6.6" y1="27.6" x2="19.6" y2="4.2" stroke="#8a8a8a" stroke-width="1" /><line x1="9.2" y1="27.6" x2="22.2" y2="4.2" stroke="#8a8a8a" stroke-width="1" /><line x1="11.8" y1="27.6" x2="24.8" y2="4.2" stroke="#8a8a8a" stroke-width="1" /><line x1="14.4" y1="27.6" x2="27.4" y2="4.2" stroke="#8a8a8a" stroke-width="1" /><line x1="17.0" y1="27.6" x2="30.0" y2="4.2" stroke="#8a8a8a" stroke-width="1" /><line x1="19.6" y1="27.6" x2="32.6" y2="4.2" stroke="#8a8a8a" stroke-width="1" /><line x1="22.2" y1="27.6" x2="35.2" y2="4.2" stroke="#8a8a8a" stroke-width="1" /><line x1="24.8" y1="27.6" x2="37.8" y2="4.2" stroke="#8a8a8a" stroke-width="1" /><line x1="27.400000000000002" y1="27.6" x2="40.400000000000006" y2="4.2" stroke="#8a8a8a" stroke-width="1" /><line x1="30.0" y1="27.6" x2="43.0" y2="4.2" stroke="#8a8a8a" stroke-width="1" /><line x1="32.6" y1="27.6" x2="45.6" y2="4.2" stroke="#8a8a8a" stroke-width="1" /><line x1="35.2" y1="27.6" x2="48.2" y2="4.2" stroke="#8a8a8a" stroke-width="1" /></g></g><rect x="8.2" y="4.2" width="23.8" height="23.4" fill="none" stroke="#ff8000" stroke-width="1.4"/><text x="10.6" y="20.4" font-size="9.5" font-weight="bold" fill="#00e8f0" font-family="Liberation Sans,sans-serif" textLength="14.5" lengthAdjust="spacingAndGlyphs">mm</text><text x="26" y="13" font-size="6.5" font-weight="bold" fill="#00e8f0" font-family="Liberation Sans,sans-serif">2</text></svg></div>
<div class="tb" style="left:1076px;top:35px"><svg viewBox="0 0 40 32"><line x1="7.8" y1="16.5" x2="32" y2="16.5" stroke="#ff8000" stroke-width="1.4" /></svg></div>
<div class="tb" style="left:1076px;top:77px"><svg viewBox="0 0 40 32"><line x1="19.6" y1="4.2" x2="19.6" y2="26.8" stroke="#ff8000" stroke-width="1.3" /><line x1="7.8" y1="15.5" x2="30.9" y2="15.5" stroke="#ff8000" stroke-width="1.3" /><circle cx="19.6" cy="15.5" r="4.2" fill="none" stroke="#ff8000" stroke-width="1.3"/></svg></div>
<div class="tb" style="left:1121px;top:35px"><svg viewBox="0 0 40 32"><circle cx="20" cy="15.6" r="12" fill="none" stroke="#ff8000" stroke-width="1.4"/></svg></div>
<div class="tb" style="left:1121px;top:77px"><svg viewBox="0 0 40 32"><line x1="8" y1="23" x2="25.9" y2="4.2" stroke="#ff8000" stroke-width="1.3" /><line x1="14" y1="27.8" x2="31.8" y2="9" stroke="#ff8000" stroke-width="1.3" /></svg></div>
<div class="tb" style="left:1166px;top:35px"><svg viewBox="0 0 40 32"><circle cx="19.4" cy="15.6" r="11.5" fill="none" stroke="#ff8000" stroke-width="1.4"/><circle cx="19.4" cy="15.6" r="6.3" fill="none" stroke="#ff8000" stroke-width="1.4"/></svg></div>
<div class="tb" style="left:1166px;top:77px"><svg viewBox="0 0 40 32"><line x1="19.4" y1="4.2" x2="19.4" y2="27.4" stroke="#ff8000" stroke-width="1.3" /><line x1="7.8" y1="27.4" x2="31" y2="27.4" stroke="#ff8000" stroke-width="1.3" /></svg></div>
<div class="tb" style="left:1212px;top:35px"><svg viewBox="0 0 40 32"><line x1="4.9" y1="15.4" x2="35" y2="15.4" stroke="#ff8000" stroke-width="1.3" /><line x1="14.9" y1="10.4" x2="25" y2="10.4" stroke="#ff8000" stroke-width="1.3" /><line x1="14.9" y1="20.4" x2="25" y2="20.4" stroke="#ff8000" stroke-width="1.3" /></svg></div>
<div class="tb" style="left:1212px;top:77px"><svg viewBox="0 0 40 32"><path d="M8.2 22 A11.8 11.8 0 0 1 31.8 22" fill="none" stroke="#ff8000" stroke-width="1.4" /></svg></div>
<div class="tb" style="left:1272px;top:35px"><svg viewBox="0 0 40 32"><line x1="8.6" y1="25.6" x2="17.2" y2="16" stroke="#ff8000" stroke-width="1.3" /><line x1="33.2" y1="25.6" x2="25.2" y2="16.4" stroke="#ff8000" stroke-width="1.3" /><path d="M17.2 16 Q21 11.5 25.2 16.4" fill="none" stroke="#c4c4c4" stroke-width="1.1" /><path d="M17.5 15.5 L19.6 19.6 Q24 18.5 25 15.6" fill="none" stroke="#c4c4c4" stroke-width="1" /><circle cx="20.6" cy="15.4" r="2" fill="none" stroke="#00e8f0" stroke-width="1"/><path d="M33 7.5 H27.4 L23.4 12" fill="none" stroke="#00e8f0" stroke-width="1.2" /><polygon points="22.30,13.20 23.44,8.83 26.53,11.61" fill="#00e8f0"/><circle cx="8.9" cy="25.3" r="0.9" fill="#c4c4c4"/><circle cx="32.9" cy="25.3" r="0.9" fill="#c4c4c4"/></svg></div>
<div class="tb" style="left:1272px;top:77px"><svg viewBox="0 0 40 32"><line x1="7.4" y1="10.5" x2="17.4" y2="10.5" stroke="#ff8000" stroke-width="1.3" /><line x1="5.6" y1="10.5" x2="7.4" y2="10.5" stroke="#c4c4c4" stroke-width="1.1" /><line x1="24.5" y1="18" x2="24.5" y2="27.4" stroke="#ff8000" stroke-width="1.3" /><path d="M17.4 10.5 H20 M24.5 15.4 V18" fill="none" stroke="#c4c4c4" stroke-width="1.1" /><path d="M19.6 10.6 Q24 11.6 24.5 16" fill="none" stroke="#00e8f0" stroke-width="1.2" /><line x1="24.5" y1="27.4" x2="24.5" y2="29" stroke="#c4c4c4" stroke-width="1.1" /><path d="M33.6 5.5 H28 L24 10" fill="none" stroke="#00e8f0" stroke-width="1.2" /><polygon points="22.90,11.20 24.04,6.83 27.13,9.61" fill="#00e8f0"/></svg></div>
<div class="tb" style="left:1317px;top:35px"><svg viewBox="0 0 40 32"><rect x="8.2" y="4.4" width="23.8" height="23.1" fill="none" stroke="#00e8f0" stroke-width="1.4"/><path d="M17.6 23.4 A8 8 0 1 1 22.4 23.4 L21.4 20.3 A4.7 4.7 0 1 0 18.6 20.3 Z" fill="none" stroke="#ff8000" stroke-width="1.3" /></svg></div>
<div class="tb" style="left:1317px;top:77px"><svg viewBox="0 0 40 32"><path d="M7.2 25.9 L7.2 13.4 L12.3 25.9 L12.3 13.4 L17.4 25.9 L17.4 13.4 L22.5 25.9 L22.5 13.4 L27.6 25.9 L27.6 13.4 L32.7 25.9 L32.7 13.4" fill="none" stroke="#ff8000" stroke-width="1.45" stroke-linejoin="miter"/><line x1="7.4" y1="7" x2="7.4" y2="13" stroke="#00e8f0" stroke-width="1.2" /><line x1="32.8" y1="7" x2="32.8" y2="13" stroke="#00e8f0" stroke-width="1.2" /><line x1="8.4" y1="9.2" x2="31.8" y2="9.2" stroke="#00e8f0" stroke-width="1.2" /><polygon points="31.80,9.20 28.26,11.27 28.26,7.13" fill="#00e8f0"/><polygon points="8.40,9.20 11.94,7.13 11.94,11.27" fill="#00e8f0"/><path d="M17.6 11.4 V14.8 M22.6 11.4 V14.8 M17.6 13.2 H22.6" fill="none" stroke="#00e8f0" stroke-width="1.1" /><circle cx="9.6" cy="19.5" r="1.5" fill="#00e8f0"/></svg></div>
<div class="tb" style="left:1362px;top:35px"><svg viewBox="0 0 40 32"><line x1="4.9" y1="7.5" x2="28" y2="7.5" stroke="#f2f2f2" stroke-width="1.3" /><line x1="4.9" y1="24.4" x2="28" y2="24.4" stroke="#f2f2f2" stroke-width="1.3" /><line x1="7.6" y1="8.8" x2="7.6" y2="23.2" stroke="#00e8f0" stroke-width="1.3" /><polygon points="7.60,23.20 5.40,19.42 9.80,19.42" fill="#00e8f0"/><polygon points="7.60,8.80 9.80,12.58 5.40,12.58" fill="#00e8f0"/><path d="M28.6 10.5 V4.4 H35.5 V12.5 H32.5 V19.5 H35.5 V27.5 H28.6 V21.5" fill="none" stroke="#c4c4c4" stroke-width="1.1" /><polyline points="13.0,9.3 15.6,12.0 18.2,9.3 20.8,12.0 23.4,9.3 26.0,12.0 28.6,9.3" fill="none" stroke="#c4c4c4" stroke-width="1.1"/><polyline points="13.0,22.4 15.6,19.6 18.2,22.4 20.8,19.6 23.4,22.4 26.0,19.6 28.6,22.4" fill="none" stroke="#c4c4c4" stroke-width="1.1"/><path d="M13 9.3 Q10.5 16 13 22.4" fill="none" stroke="#c4c4c4" stroke-width="1.1" /></svg></div>
<div class="tb" style="left:1362px;top:77px"><svg viewBox="0 0 40 32"><line x1="1" y1="4.9" x2="26.8" y2="4.9" stroke="#f2f2f2" stroke-width="1.5" /><line x1="1" y1="27.1" x2="26.8" y2="27.1" stroke="#f2f2f2" stroke-width="1.5" /><line x1="3.6" y1="6.2" x2="3.6" y2="25.8" stroke="#00e8f0" stroke-width="1.3" /><polygon points="3.60,25.80 1.40,22.02 5.80,22.02" fill="#00e8f0"/><polygon points="3.60,6.20 5.80,9.98 1.40,9.98" fill="#00e8f0"/><circle cx="26.8" cy="15.8" r="11.6" fill="none" stroke="#ff8000" stroke-width="1.4"/><polygon points="33.7,13.1 37.0,13.7 37.0,17.9 33.7,18.5 33.6,18.7 35.5,21.5 32.5,24.5 29.7,22.6 29.5,22.7 28.9,26.0 24.7,26.0 24.1,22.7 23.9,22.6 21.1,24.5 18.1,21.5 20.0,18.7 19.9,18.5 16.6,17.9 16.6,13.7 19.9,13.1 20.0,12.9 18.1,10.1 21.1,7.1 23.9,9.0 24.1,8.9 24.7,5.6 28.9,5.6 29.5,8.9 29.7,9.0 32.5,7.1 35.5,10.1 33.6,12.9" fill="none" stroke="#c4c4c4" stroke-width="1.1" stroke-linejoin="round"/><circle cx="26.8" cy="15.8" r="3" fill="none" stroke="#c4c4c4" stroke-width="1.1"/></svg></div>
<div class="tb" style="left:1407px;top:35px"><svg viewBox="0 0 40 32"><line x1="8.2" y1="4.2" x2="8.2" y2="17" stroke="#c4c4c4" stroke-width="1" /><line x1="31.8" y1="4.2" x2="31.8" y2="17" stroke="#c4c4c4" stroke-width="1" /><line x1="9.2" y1="6.6" x2="30.8" y2="6.6" stroke="#c4c4c4" stroke-width="1" /><polygon points="30.80,6.60 27.26,8.43 27.26,4.77" fill="#c4c4c4"/><polygon points="9.20,6.60 12.74,4.77 12.74,8.43" fill="#c4c4c4"/><line x1="13.5" y1="9" x2="13.5" y2="20" stroke="#00e8f0" stroke-width="1.1" /><line x1="26.5" y1="9" x2="26.5" y2="20" stroke="#00e8f0" stroke-width="1.1" /><line x1="14.3" y1="11.4" x2="25.7" y2="11.4" stroke="#00e8f0" stroke-width="1.1" /><polygon points="25.70,11.40 22.40,13.35 22.40,9.45" fill="#00e8f0"/><polygon points="14.30,11.40 17.60,9.45 17.60,13.35" fill="#00e8f0"/><line x1="14" y1="14.3" x2="26" y2="14.3" stroke="#ff8000" stroke-width="1.3" /><line x1="14" y1="26.3" x2="26" y2="26.3" stroke="#ff8000" stroke-width="1.3" /><path d="M14 14.3 A11.8 7 0 0 0 14 26.3 M26 14.3 A11.8 7 0 0 1 26 26.3" fill="none" stroke="#00e8f0" stroke-width="1.2" /><line x1="20.2" y1="15.4" x2="20.2" y2="25.4" stroke="#00e8f0" stroke-width="1.2" /><polygon points="20.20,25.40 18.13,21.86 22.27,21.86" fill="#00e8f0"/><polygon points="20.20,15.40 22.27,18.94 18.13,18.94" fill="#00e8f0"/><path d="M1 27.3 H6.3 L14 19.6 M39 27.3 H33.7 L26 19.6" fill="none" stroke="#c4c4c4" stroke-width="1" /><polygon points="7.00,26.60 8.29,22.55 11.05,25.31" fill="#c4c4c4"/><polygon points="33.00,26.60 28.95,25.31 31.71,22.55" fill="#c4c4c4"/></svg></div>
<div class="tb" style="left:1407px;top:77px"><svg viewBox="0 0 40 32"><circle cx="19.9" cy="16.1" r="11.8" fill="none" stroke="#ff8000" stroke-width="1.3"/><circle cx="19.9" cy="16.1" r="9" fill="none" stroke="#ff8000" stroke-width="1.3"/><line x1="13.6" y1="22.4" x2="28.4" y2="7.6" stroke="#00e8f0" stroke-width="1.3" /><polygon points="28.40,7.60 26.95,12.50 23.50,9.05" fill="#00e8f0"/><polygon points="13.60,22.40 15.05,17.50 18.50,20.95" fill="#00e8f0"/><circle cx="19.9" cy="16.1" r="2" fill="#ff8000"/></svg></div>
<div class="tb" style="left:1454px;top:35px"><svg viewBox="0 0 40 32"><path d="M10.3 11.4 H14.2 V23.4 H19.2 V11.4 H23.5 V23.4 H28.5 V11.4 H32.9 V27.75 H10.3 Z" fill="none" stroke="#c4c4c4" stroke-width="1.1" /><line x1="10.3" y1="4.2" x2="10.3" y2="18.6" stroke="#00e8f0" stroke-width="1.2" /><line x1="19.5" y1="4.2" x2="19.5" y2="18.6" stroke="#00e8f0" stroke-width="1.2" /><line x1="28.6" y1="4.2" x2="28.6" y2="18.6" stroke="#00e8f0" stroke-width="1.2" /><line x1="11" y1="6.6" x2="18.8" y2="6.6" stroke="#00e8f0" stroke-width="1.1" /><polygon points="18.80,6.60 15.50,8.67 15.50,4.53" fill="#00e8f0"/><polygon points="11.00,6.60 14.30,4.53 14.30,8.67" fill="#00e8f0"/><line x1="20.2" y1="6.6" x2="27.9" y2="6.6" stroke="#00e8f0" stroke-width="1.1" /><polygon points="27.90,6.60 24.60,8.67 24.60,4.53" fill="#00e8f0"/><polygon points="20.20,6.60 23.50,4.53 23.50,8.67" fill="#00e8f0"/><line x1="7.9" y1="18.6" x2="32" y2="18.6" stroke="#ff8000" stroke-width="1.3" /><circle cx="10.3" cy="18.6" r="1.6" fill="#00e8f0"/><circle cx="19.5" cy="18.6" r="1.6" fill="#00e8f0"/><circle cx="28.6" cy="18.6" r="1.6" fill="#00e8f0"/></svg></div>
<div class="tb" style="left:1454px;top:77px"><svg viewBox="0 0 40 32"><path d="M7.2 17.5 L11.3 7 L15.4 17.5 L19.5 7 L23.5 17.5 L27.6 7 L31.7 17.5 V24.8 H7.2 Z" fill="none" stroke="#c4c4c4" stroke-width="1.1" /><path d="M9.5 11.5 L7.2 17.5 M13.1 11.5 L15.4 17.5 L17.7 11.5 M21.2 11.5 L23.5 17.5 L25.8 11.5 M29.4 11.5 L31.7 17.5" fill="none" stroke="#00e8f0" stroke-width="1.1" /><line x1="7.2" y1="11.5" x2="32" y2="11.5" stroke="#ff8000" stroke-width="1.3" /><line x1="7.9" y1="19.2" x2="14.700000000000001" y2="19.2" stroke="#00e8f0" stroke-width="1" /><polygon points="14.70,19.20 11.40,21.40 11.40,17.00" fill="#00e8f0"/><polygon points="7.90,19.20 11.20,17.00 11.20,21.40" fill="#00e8f0"/><line x1="16.1" y1="19.2" x2="22.9" y2="19.2" stroke="#00e8f0" stroke-width="1" /><polygon points="22.90,19.20 19.60,21.40 19.60,17.00" fill="#00e8f0"/><polygon points="16.10,19.20 19.40,17.00 19.40,21.40" fill="#00e8f0"/><line x1="24.200000000000003" y1="19.2" x2="31.0" y2="19.2" stroke="#00e8f0" stroke-width="1" /><polygon points="31.00,19.20 27.70,21.40 27.70,17.00" fill="#00e8f0"/><polygon points="24.20,19.20 27.50,17.00 27.50,21.40" fill="#00e8f0"/></svg></div>
<div class="tb" style="left:1499px;top:35px"><svg viewBox="0 0 40 32"><path d="M9.4 26 A10.6 10.6 0 0 1 30.6 26" fill="none" stroke="#ff8000" stroke-width="1.3" /><path d="M14.5 26 A5.8 5.8 0 0 1 25.8 26" fill="none" stroke="#c4c4c4" stroke-width="1.1" /><path d="M4.8 26 V21.8 H8.6 V26 M35.2 26 V21.8 H31.4 V26" fill="none" stroke="#c4c4c4" stroke-width="1.1" /><path d="M12.3 16.8 L14.2 12.6 L17.6 14 L16.4 18 M21.6 15 L24 11.6 L27.3 13.6 L25.6 17.4" fill="none" stroke="#c4c4c4" stroke-width="1.1" /><circle cx="12.5" cy="17.2" r="1.5" fill="#00e8f0"/><circle cx="21.6" cy="16.2" r="1.5" fill="#00e8f0"/><circle cx="27.5" cy="21.9" r="1.5" fill="#00e8f0"/><path d="M10.4 9.6 Q15.5 5.6 20.6 7.8" fill="none" stroke="#00e8f0" stroke-width="1.2" /><polygon points="9.20,10.80 10.32,6.92 13.08,9.68" fill="#00e8f0"/><polygon points="22.00,8.40 17.97,8.67 19.62,5.13" fill="#00e8f0"/></svg></div>
<div class="tb" style="left:1499px;top:77px"><svg viewBox="0 0 40 32"><path d="M9.4 26 A10.6 10.6 0 0 1 30.6 26" fill="none" stroke="#ff8000" stroke-width="1.3" /><path d="M14.5 26 A5.8 5.8 0 0 1 25.8 26" fill="none" stroke="#c4c4c4" stroke-width="1.1" /><path d="M4.8 26 V21.8 H8.6 V26 M35.2 26 V21.8 H31.4 V26" fill="none" stroke="#c4c4c4" stroke-width="1.1" /><path d="M12.3 16.8 L14.2 12.6 L17.6 14 L16.4 18 M21.6 15 L24 11.6 L27.3 13.6 L25.6 17.4" fill="none" stroke="#c4c4c4" stroke-width="1.1" /><circle cx="12.5" cy="17.2" r="1.5" fill="#00e8f0"/><circle cx="21.6" cy="16.2" r="1.5" fill="#00e8f0"/><circle cx="27.5" cy="21.9" r="1.5" fill="#00e8f0"/><path d="M10.4 9.6 Q15.5 5.6 20.6 7.8" fill="none" stroke="#00e8f0" stroke-width="1.2" /><polygon points="9.20,10.80 10.32,6.92 13.08,9.68" fill="#00e8f0"/><polygon points="22.00,8.40 17.97,8.67 19.62,5.13" fill="#00e8f0"/><line x1="5.6" y1="8" x2="17" y2="25.5" stroke="#18b8c0" stroke-width="1" /><line x1="26.5" y1="4" x2="17" y2="25.5" stroke="#18b8c0" stroke-width="1" /></svg></div>
<div class="tb" style="left:1548px;top:35px"><svg viewBox="0 0 40 32"><path d="M5 11.2 H9.5 Q13.5 8 15.5 5.2 Q19 11.5 27.8 10.2 V21.6 Q19 20.2 15.5 26.5 Q13.5 23.6 9.5 20.2 H5 Z" fill="none" stroke="#c4c4c4" stroke-width="1.1" /><line x1="5" y1="15.6" x2="28.2" y2="15.6" stroke="#ff8000" stroke-width="1.3" /><line x1="15.5" y1="5.2" x2="35" y2="5.2" stroke="#00e8f0" stroke-width="1.2" /><line x1="15.5" y1="26.5" x2="35" y2="26.5" stroke="#00e8f0" stroke-width="1.2" /><line x1="33.9" y1="6.2" x2="33.9" y2="25.5" stroke="#00e8f0" stroke-width="1.2" /><polygon points="33.90,25.50 31.83,21.96 35.97,21.96" fill="#00e8f0"/><polygon points="33.90,6.20 35.97,9.74 31.83,9.74" fill="#00e8f0"/><circle cx="15.5" cy="5.2" r="1.5" fill="#00e8f0"/><circle cx="15.5" cy="26.5" r="1.5" fill="#00e8f0"/></svg></div>
<div class="tb" style="left:1548px;top:76px"><svg viewBox="0 0 40 32"><line x1="8.2" y1="3" x2="8.2" y2="9.2" stroke="#00e8f0" stroke-width="1.2" /><line x1="31.8" y1="3" x2="31.8" y2="9.2" stroke="#00e8f0" stroke-width="1.2" /><line x1="9.2" y1="5.5" x2="30.8" y2="5.5" stroke="#00e8f0" stroke-width="1.2" /><polygon points="30.80,5.50 27.26,7.57 27.26,3.43" fill="#00e8f0"/><polygon points="9.20,5.50 12.74,3.43 12.74,7.57" fill="#00e8f0"/><line x1="8.2" y1="13" x2="8.2" y2="23.6" stroke="#ff8000" stroke-width="1.4" /><line x1="31.8" y1="8" x2="31.8" y2="18.6" stroke="#ff8000" stroke-width="1.4" /><path d="M9.4 26 V23.6 M9.4 20 V13.4 Q9.4 10.5 12 10.5 H29.5 Q30.6 10.5 30.6 12 V14 M10 20.6 H14 Q16 20.6 15.4 22.8 Q14.6 24.6 10 24.2 M30.6 19.5 H26.6 Q24.2 19.6 24.8 22.4 Q26 24.6 29.5 24.2 L30.4 26.4" fill="none" stroke="#c4c4c4" stroke-width="1.1" /><circle cx="8.2" cy="18.6" r="1.5" fill="#00e8f0"/><circle cx="31.8" cy="13.2" r="1.5" fill="#00e8f0"/></svg></div>
<div class="tb" style="left:1593px;top:35px"><svg viewBox="0 0 40 32"><path d="M22 6.6 A11.5 11.5 0 1 0 22 24.6 L28.9 15.6 Z" fill="none" stroke="#c4c4c4" stroke-width="1.1" /><circle cx="15" cy="15.6" r="8.2" fill="none" stroke="#ff8000" stroke-width="1.5"/><path d="M19.4 13.2 A5 5 0 1 0 19.4 18 L17 15.6 Z" fill="none" stroke="#c4c4c4" stroke-width="1.1" /><line x1="11.6" y1="15.6" x2="16" y2="15.6" stroke="#00e8f0" stroke-width="1.2" /><line x1="13.8" y1="13.4" x2="13.8" y2="17.8" stroke="#00e8f0" stroke-width="1.2" /><polygon points="16.80,15.60 13.97,17.31 13.97,13.89" fill="#00e8f0"/><line x1="35.2" y1="15.6" x2="31.4" y2="15.6" stroke="#00e8f0" stroke-width="1.2" /><polygon points="31.40,15.60 34.94,13.53 34.94,17.67" fill="#00e8f0"/></svg></div>
<div class="tb" style="left:1593px;top:76px"><svg viewBox="0 0 40 32"><path d="M11 2.8 H30 L33 5.8 V23.6 L30 26.6 H11 L8 23.6 V5.8 Z" fill="none" stroke="#00e8f0" stroke-width="1.6" /><rect x="11.4" y="6" width="8" height="7.4" fill="none" stroke="#00e8f0" stroke-width="1.1"/><rect x="21.6" y="6" width="8" height="7.4" fill="none" stroke="#00e8f0" stroke-width="1.1"/><rect x="11.4" y="16" width="8" height="7.4" fill="none" stroke="#00e8f0" stroke-width="1.1"/><rect x="21.6" y="16" width="8" height="7.4" fill="none" stroke="#00e8f0" stroke-width="1.1"/><path d="M13 9.7 H17.8 M15.4 7.4 V12 M23.2 9.7 H28 M13.4 17.6 L17.4 21.8 M17.4 17.6 L13.4 21.8 M23.2 19.7 H28" fill="none" stroke="#00e8f0" stroke-width="1.2" /><circle cx="25.6" cy="17.6" r="0.7" fill="#00e8f0"/><circle cx="25.6" cy="21.8" r="0.7" fill="#00e8f0"/></svg></div>
<div class="tb" style="left:1637px;top:35px"><svg viewBox="0 0 40 32"><circle cx="19.6" cy="15.6" r="11" fill="none" stroke="#f2f2f2" stroke-width="1.1"/><path d="M14.6 5 A11.8 11.8 0 0 1 24.6 5 M14.6 26.2 A11.8 11.8 0 0 0 24.6 26.2 M8.4 10.8 A11.8 11.8 0 0 0 8.4 20.4 M30.8 10.8 A11.8 11.8 0 0 1 30.8 20.4" fill="none" stroke="#ff8000" stroke-width="1.5" /><line x1="12" y1="15.6" x2="27.2" y2="15.6" stroke="#00e8f0" stroke-width="1.3" /><polygon points="27.20,15.60 23.42,17.80 23.42,13.40" fill="#00e8f0"/><polygon points="12.00,15.60 15.78,13.40 15.78,17.80" fill="#00e8f0"/><line x1="19.6" y1="8" x2="19.6" y2="23.2" stroke="#00e8f0" stroke-width="1.3" /><polygon points="19.60,23.20 17.40,19.42 21.80,19.42" fill="#00e8f0"/><polygon points="19.60,8.00 21.80,11.78 17.40,11.78" fill="#00e8f0"/></svg></div>
<div class="tb" style="left:1637px;top:77px"><svg viewBox="0 0 40 32"><line x1="20" y1="7" x2="20" y2="27.8" stroke="#00e8f0" stroke-width="1.2" stroke-dasharray="2.4 1.6"/><polygon points="20.00,4.40 22.20,8.41 17.80,8.41" fill="#00e8f0"/><line x1="8.5" y1="16.5" x2="30" y2="16.5" stroke="#00e8f0" stroke-width="1.2" stroke-dasharray="2.4 1.6"/><polygon points="32.60,16.50 28.59,18.70 28.59,14.30" fill="#00e8f0"/><circle cx="20" cy="16.5" r="2.7" fill="#ff8000"/></svg></div>
<div class="tb" style="left:1681px;top:35px"><svg viewBox="0 0 40 32"><path d="M14 7.5 H29 A8.6 8.6 0 0 1 29 24.8 H14 L10 21" fill="none" stroke="#00e8f0" stroke-width="1.2" /><path d="M14 7.5 L10 10.4" fill="none" stroke="#00e8f0" stroke-width="1.2" /><path d="M10.4 9.8 Q7.6 15.6 10.4 21.6" fill="none" stroke="#ff8000" stroke-width="1.3" /><circle cx="29" cy="16" r="3.9" fill="none" stroke="#00e8f0" stroke-width="1.2"/><line x1="1" y1="15.6" x2="10" y2="15.6" stroke="#00e8f0" stroke-width="1.2" /><polygon points="10.00,15.60 6.22,17.80 6.22,13.40" fill="#00e8f0"/></svg></div>
<div class="tb" style="left:1681px;top:77px"><svg viewBox="0 0 40 32"><path d="M5.2 6.5 H27 A9.5 9.5 0 0 1 27 25.5 H5.2 Z" fill="none" stroke="#00e8f0" stroke-width="1.2" /><rect x="10.2" y="4.3" width="11.3" height="4.2" fill="none" stroke="#ff8000" stroke-width="1.2"/><rect x="10.2" y="23" width="11.3" height="4.2" fill="none" stroke="#ff8000" stroke-width="1.2"/><line x1="15.9" y1="10.5" x2="15.9" y2="21.5" stroke="#00e8f0" stroke-width="2.6" /><polygon points="15.90,8.60 19.32,12.61 12.48,12.61" fill="#00e8f0"/><polygon points="15.90,23.40 12.48,19.39 19.32,19.39" fill="#00e8f0"/><line x1="23.5" y1="16.1" x2="31" y2="16.1" stroke="#00e8f0" stroke-width="2.2" /><polygon points="21.00,16.10 25.25,12.68 25.25,19.52" fill="#00e8f0"/><polygon points="33.20,16.10 28.95,19.52 28.95,12.68" fill="#00e8f0"/><path d="M32.6 9 Q37.2 16 32.6 23.2 M34.6 8 Q39.6 16 34.6 24.2" fill="none" stroke="#ff8000" stroke-width="1.2" /><path d="M32.6 9 L34.6 8 M32.6 23.2 L34.6 24.2" fill="none" stroke="#ff8000" stroke-width="1.2" /></svg></div>
<div class="sep" style="left:55px"></div>
<div class="sep" style="left:206px"></div>
<div class="sep" style="left:447px"></div>
<div class="sep" style="left:778px"></div>
<div class="sep" style="left:1064px"></div>
<div class="sep" style="left:1261px"></div>
<div class="sep" style="left:1726px"></div>
<div class="glab" style="left:6px;width:38px">坐标系</div>
<div class="glab" style="left:125px;width:12px">点</div>
<div class="glab" style="left:320px;width:12px">线</div>
<div class="glab" style="left:598px;width:32px">圆/弧</div>
<div class="glab" style="left:907px;width:26px">标注</div>
<div class="glab" style="left:1138px;width:50px">形位公差</div>
<div class="glab" style="left:1485px;width:24px">特殊</div>
<div class="dd" style="left:192px"></div>
<div class="dd" style="left:765px"></div>
<div class="dd" style="left:1046px"></div>
<div class="dd" style="left:1245px"></div>
<div class="dd" style="left:1714px"></div>
<div class="gb" style="left:1740px;top:38px;width:80px;height:80px;line-height:78px;font-size:12px">记录管理</div>
<div class="gb" style="left:1830px;top:38px;width:80px;height:80px;line-height:78px;font-size:12px">统计分析</div>
<svg class="a" style="left:9px;top:133px;border:1px solid #727272" width="292" height="203" viewBox="0 0 292 203"><defs><linearGradient id="pvbg" x1="0" y1="0" x2="1" y2="0.25"><stop offset="0" stop-color="#262626"/><stop offset="0.35" stop-color="#3a3a3a"/><stop offset="0.6" stop-color="#4d4d4d"/><stop offset="1" stop-color="#6a6a6a"/></linearGradient><linearGradient id="ptg" gradientUnits="userSpaceOnUse" x1="35" y1="45" x2="135" y2="150"><stop offset="0" stop-color="#9a9a9a"/><stop offset="1" stop-color="#727272"/></linearGradient></defs><rect x="0" y="0" width="292" height="203" fill="url(#pvbg)"/><path d="M196 0 H292 V203 H240 V120 L228 86 V12 L200 4 Z" fill="#737373"/><path d="M262 0 H292 V203 H270 Z" fill="#7b7b7b"/><path d="M228 60 L250 58 V128 H228 Z" fill="#5c5c5c"/><rect x="276" y="52" width="9" height="70" fill="#5a5a5a"/><path d="M155 7 L226 12 L228 86 L156 77 Z" fill="#4a4a4a"/><path d="M159 12 L223 16.5 L224 81 L160 72.5 Z" fill="#626262"/><ellipse cx="181" cy="45" rx="21" ry="29" fill="#8f8f8f"/><path d="M164 36 L199 39 L199 50 L164 47 Z" fill="#4c4c4c"/><rect x="203" y="20" width="19" height="56" fill="#505050" transform="skewY(4) translate(0,-14)"/><path d="M175 85 L215 90 L213 82 L178 78 Z" fill="#3a3a3a"/><path d="M165 124 L215 115 L291 117 L291 134 L228 147 L165 140 Z" fill="#3e3e3e"/><path d="M165 124 L215 115 L291 117 L228 131 Z" fill="#545454"/><path d="M152 203 V178 L172 148 L228 150 L291.5 136 V203 Z" fill="#606060"/><path d="M152 203 V178 L172 148 L205 150 L186 182 V203 Z" fill="#444"/><path d="M186 182 L205 150 L228 150 L291.5 136 V160 L215 178 Z" fill="#6c6c6c"/><path d="M158.5 175 L170 154.5 L202 158 L188 180 Z" fill="#3a3a3a" stroke="#a03434" stroke-width="1"/><circle cx="168.4" cy="166.3" r="3" fill="#858585"/><circle cx="178.4" cy="168" r="5.2" fill="#9a9a9a"/><circle cx="189.3" cy="170" r="3" fill="#858585"/><circle cx="236.3" cy="187" r="8.5" fill="#474747"/><circle cx="236.8" cy="187" r="4.6" fill="#8a2c2c"/><g><circle cx="84.2" cy="99.3" r="36" fill="#8a8a8a"/><g transform="rotate(0 84.2 99.3)"><path d="M73.2 74.3 L71.0 47.8 Q71.0 45.8 73.2 45.8 H95.2 Q97.4 45.8 97.4 47.8 L95.2 74.3 Z" fill="#8a8a8a"/><circle cx="84.2" cy="57.3" r="4.6" fill="#353535"/></g><g transform="rotate(240 84.2 99.3)"><path d="M73.2 74.3 L71.0 47.8 Q71.0 45.8 73.2 45.8 H95.2 Q97.4 45.8 97.4 47.8 L95.2 74.3 Z" fill="#8a8a8a"/><circle cx="84.2" cy="57.3" r="4.6" fill="#353535"/></g><g transform="rotate(120 84.2 99.3)"><path d="M73.2 74.3 L71.0 47.8 Q71.0 45.8 73.2 45.8 H95.2 Q97.4 45.8 97.4 47.8 L95.2 74.3 Z" fill="#8a8a8a"/><circle cx="84.2" cy="57.3" r="4.6" fill="#353535"/></g><circle cx="84.2" cy="99.3" r="24.5" fill="none" stroke="#aaa" stroke-width="0.6" opacity="0.7"/><circle cx="84.2" cy="99.3" r="13.6" fill="#363636"/><path d="M53.0 81.3 A36 36 0 0 1 71.2 65.69999999999999 M97.2 65.69999999999999 A36 36 0 0 1 115.4 81.3 M65.7 130.3 A36 36 0 0 0 102.7 130.3" fill="none" stroke="#b050b0" stroke-width="0.9"/></g><rect x="25" y="40" width="120" height="115" fill="url(#ptsh)" style="mix-blend-mode:soft-light" opacity="0.0"/><g stroke="#7e2c2c" stroke-width="0.8" fill="none"><path d="M1 67.6 L31 16.5 L84.2 45.5 L141 13.6 M141 13.6 L190 91" /><path d="M1 107 L36 126 V185 H134 V126 L190 100" opacity="0.9"/><path d="M84.2 99.3 L36 72 M84.2 99.3 L124 79.4 M84.2 99.3 V152.7"/></g><g fill="#a03030"><polygon points="31,16.5 26,20.5 29.5,22.5"/><polygon points="36,185 43,183.4 43,186.6"/><polygon points="134,185 127,183.4 127,186.6"/><polygon points="51.6,80 45,78 46.6,75.4"/><polygon points="84.2,138 82.8,144 85.6,144"/></g><text x="8" y="53" font-size="6.8" fill="#2c8c2c" font-family="Liberation Mono,monospace" transform="rotate(-60 8 53)">[D2]26.378</text><text x="24" y="64" font-size="6.8" fill="#2c8c2c" font-family="Liberation Mono,monospace" transform="rotate(30 24 64)">[R1]10.269</text><text x="120" y="80" font-size="6.8" fill="#2c8c2c" font-family="Liberation Mono,monospace" transform="rotate(-30 120 80)">[R3]10.006</text><text x="80" y="169" font-size="6.8" fill="#2c8c2c" font-family="Liberation Mono,monospace" transform="rotate(-90 80 169)">[H2]10.253</text><text x="63" y="184" font-size="6.8" fill="#2c8c2c" font-family="Liberation Mono,monospace" transform="rotate(0 63 184)">[X1]26.306</text></svg>
<div class="gb" style="left:30px;top:347px;width:114px;height:68px"><svg width="112" height="66" viewBox="31 348 112 66" style="position:absolute;left:0;top:0"><polygon points="72,360.5 72,402.5 103,381.5" fill="#00f8ff"/></svg></div>
<div class="gb" style="left:30px;top:421px;width:114px;height:35px"><svg width="112" height="33" viewBox="31 422 112 33" style="position:absolute;left:0;top:0"><path d="M41 428 H65 V450 H44.5 L41 446.5 Z M46.5 428 V435.5 H59.5 M47 450 V441.5 H60 V450 M50 445.5 H55.5" fill="none" stroke="#00f0ff" stroke-width="1.7"/><path d="M57 429.5 L65.5 438.5 M65.5 429.5 L57 438.5" stroke="#e81010" stroke-width="1.6"/></svg><span style="position:absolute;left:44px;top:8px;font-size:14px;line-height:18px">取消保存</span></div>
<div class="gb" style="left:174px;top:353px;width:104px;height:43px"><svg width="102" height="41" viewBox="175 354 102 41" style="position:absolute;left:0;top:0"><rect x="186" y="363" width="6" height="24" fill="#ff7800"/><polygon points="198,363 198,387 215,375" fill="#00f8ff"/></svg><span style="position:absolute;left:56px;top:11px;font-size:14px;line-height:18px">视频</span></div>
<div class="gb" style="left:174px;top:412px;width:104px;height:43px"><svg width="102" height="41" viewBox="175 413 102 41" style="position:absolute;left:0;top:0"><path d="M184.5 434 V424 H188 V420 H196 V424 H202.5 V431 H205.5 V427.5 H212.5 V431 H215.5 V436 H218.5 V442.5 H215.5 V448 H209.5 V445 H204.5 V448 H200 " fill="none" stroke="#00f0ff" stroke-width="1.5"/><path d="M184.5 448 V441 H187.5 V437 H184.5 V431.5 H190 V429 H196 V431.5 H200 V436.5 H203.5 V442.5 H200 V448 H195 V445 H190 V448 Z" fill="none" stroke="#ff7800" stroke-width="1.5"/></svg><span style="position:absolute;left:56px;top:11px;font-size:14px;line-height:18px">拍摄</span></div>
<svg class="a" style="left:0;top:465px" width="310" height="240" viewBox="0 465 310 240"><rect x="10.5" y="471.5" width="289" height="229" fill="none" stroke="#666" stroke-width="1"/><path d="M67 485.7 H94.5 V496.2 H104 V508.7 H57 V496.2 H67 Z" fill="#a0734a"/><rect x="57" y="496.4" width="2" height="12.3" fill="#2fe010"/><rect x="102" y="496.4" width="2" height="12.3" fill="#2fe010"/><rect x="67" y="513" width="3.2" height="14" fill="#2fe010"/><rect x="75.2" y="513" width="3.2" height="14" fill="#2fe010"/><rect x="83.2" y="513" width="3.2" height="14" fill="#2fe010"/><rect x="91.2" y="513" width="3.2" height="14" fill="#2fe010"/><path d="M-6.2 -11.5 Q8 -12 11.5 0 Q8 12 -6.2 11.5 Q-3.6 0 -6.2 -11.5 Z" fill="none" stroke="#6ecff6" stroke-width="3.0" stroke-linejoin="round" transform="translate(80.5 537.6) rotate(90) scale(1.0)"/><path d="M-6.2 -11.5 Q8 -12 11.5 0 Q8 12 -6.2 11.5 Q-3.6 0 -6.2 -11.5 Z" fill="none" stroke="#40697f" stroke-width="3.0" stroke-linejoin="round" transform="translate(229.5 500.2) rotate(270) scale(1.0)"/><rect x="216" y="511" width="3.2" height="14" fill="#7c7c7c"/><rect x="224" y="511" width="3.2" height="14" fill="#7c7c7c"/><rect x="232" y="511" width="3.2" height="14" fill="#7c7c7c"/><rect x="240" y="511" width="3.2" height="14" fill="#7c7c7c"/><path d="M216 528.7 H243.5 V539.2 H253 V551.7 H206 V539.2 H216 Z" fill="#a0734a"/><path d="M67 584.5 H94.5 V595 H104 V607.5 H57 V595 H67 Z" fill="#a0734a"/><path d="M-6.2 -11.5 Q8 -12 11.5 0 Q8 12 -6.2 11.5 Q-3.6 0 -6.2 -11.5 Z" fill="none" stroke="#40697f" stroke-width="3.0" stroke-linejoin="round" transform="translate(30.2 578) rotate(205) scale(1.0)"/><path d="M-6.2 -11.5 Q8 -12 11.5 0 Q8 12 -6.2 11.5 Q-3.6 0 -6.2 -11.5 Z" fill="none" stroke="#40697f" stroke-width="3.0" stroke-linejoin="round" transform="translate(131 578) rotate(335) scale(1.0)"/><g transform="translate(46.5 569.5) rotate(25)"><rect x="0" y="0" width="14" height="3" fill="#7c7c7c"/><rect x="0" y="8" width="14" height="3" fill="#7c7c7c"/><rect x="0" y="16" width="14" height="3" fill="#7c7c7c"/><rect x="0" y="24" width="14" height="3" fill="#7c7c7c"/></g><g transform="translate(101.5 575.5) rotate(-25)"><rect x="0" y="0" width="14" height="3" fill="#7c7c7c"/><rect x="0" y="8" width="14" height="3" fill="#7c7c7c"/><rect x="0" y="16" width="14" height="3" fill="#7c7c7c"/><rect x="0" y="24" width="14" height="3" fill="#7c7c7c"/></g><path d="M216 576.7 H243.5 V587.2 H253 V599.7 H206 V587.2 H216 Z" fill="#a0734a"/><path d="M-6.2 -11.5 Q8 -12 11.5 0 Q8 12 -6.2 11.5 Q-3.6 0 -6.2 -11.5 Z" fill="none" stroke="#40697f" stroke-width="3.0" stroke-linejoin="round" transform="translate(179.2 581.5) rotate(205) scale(1.0)"/><path d="M-6.2 -11.5 Q8 -12 11.5 0 Q8 12 -6.2 11.5 Q-3.6 0 -6.2 -11.5 Z" fill="none" stroke="#40697f" stroke-width="3.0" stroke-linejoin="round" transform="translate(280 581.5) rotate(335) scale(1.0)"/><g transform="translate(195.5 572.8) rotate(25)"><rect x="0" y="0" width="14" height="3" fill="#7c7c7c"/><rect x="0" y="8" width="14" height="3" fill="#7c7c7c"/><rect x="0" y="16" width="14" height="3" fill="#7c7c7c"/><rect x="0" y="24" width="14" height="3" fill="#7c7c7c"/></g><g transform="translate(250.5 578.8) rotate(-25)"><rect x="0" y="0" width="14" height="3" fill="#7c7c7c"/><rect x="0" y="8" width="14" height="3" fill="#7c7c7c"/><rect x="0" y="16" width="14" height="3" fill="#7c7c7c"/><rect x="0" y="24" width="14" height="3" fill="#7c7c7c"/></g><path d="M69 652.7 H92 L94.5 655.2 V663.2 H101 L104 666.2 V676.2 H57 V666.2 L60 663.2 H67 V655.2 Z" fill="#a0734a"/><path d="M-6.2 -11.5 Q8 -12 11.5 0 Q8 12 -6.2 11.5 Q-3.6 0 -6.2 -11.5 Z" fill="none" stroke="#40697f" stroke-width="3.0" stroke-linejoin="round" transform="translate(29 665.5) rotate(180) scale(1.0)"/><path d="M-6.2 -11.5 Q8 -12 11.5 0 Q8 12 -6.2 11.5 Q-3.6 0 -6.2 -11.5 Z" fill="none" stroke="#40697f" stroke-width="3.0" stroke-linejoin="round" transform="translate(132.2 665.5) rotate(360) scale(1.0)"/><rect x="40" y="652.3" width="14.2" height="3" fill="#2b6b1e"/><rect x="107" y="652.3" width="14.2" height="3" fill="#2b6b1e"/><rect x="40" y="660.3" width="14.2" height="3" fill="#2b6b1e"/><rect x="107" y="660.3" width="14.2" height="3" fill="#2b6b1e"/><rect x="40" y="668.3" width="14.2" height="3" fill="#2b6b1e"/><rect x="107" y="668.3" width="14.2" height="3" fill="#2b6b1e"/><rect x="40" y="676.3" width="14.2" height="3" fill="#2b6b1e"/><rect x="107" y="676.3" width="14.2" height="3" fill="#2b6b1e"/><g transform="translate(195.4 652.6) rotate(-22)"><rect x="0" y="0.0" width="14" height="2.8" fill="#ffffff"/><rect x="0" y="7.6" width="14" height="2.8" fill="#ffffff"/><rect x="0" y="15.2" width="14" height="2.8" fill="#ffffff"/><rect x="0" y="22.799999999999997" width="14" height="2.8" fill="#ffffff"/></g><path d="M-6.2 -11.5 Q8 -12 11.5 0 Q8 12 -6.2 11.5 Q-3.6 0 -6.2 -11.5 Z" fill="none" stroke="#6ecff6" stroke-width="3.0" stroke-linejoin="round" transform="translate(223.5 657) rotate(338) scale(0.95)"/><polygon points="246.2,661.8 250.2,662.5 250.2,667.5 246.2,668.2 246.1,668.5 248.3,671.8 244.8,675.3 241.5,673.1 241.2,673.2 240.5,677.2 235.5,677.2 234.8,673.2 234.5,673.1 231.2,675.3 227.7,671.8 229.9,668.5 229.8,668.2 225.8,667.5 225.8,662.5 229.8,661.8 229.9,661.5 227.7,658.2 231.2,654.7 234.5,656.9 234.8,656.8 235.5,652.8 240.5,652.8 241.2,656.8 241.5,656.9 244.8,654.7 248.3,658.2 246.1,661.5" fill="#ff7a08" stroke="#ff7a08" stroke-width="0" stroke-linejoin="round"/><circle cx="238" cy="665" r="4.8" fill="#2f2f2f"/></svg>
<div class="a" style="left:10px;top:711px;width:290px;height:394px;border:1px solid #2c3840"></div>
<div class="gb" style="left:83px;top:712px;width:60px;height:60px"><svg width="58" height="58" viewBox="-29 -29 58 58" style="position:absolute;left:0;top:0"><path d="M-11 5.5 L0 -5.5 L11 5.5" fill="none" stroke="#00f0ff" stroke-width="3.8" stroke-linecap="round" stroke-linejoin="round"/></svg></div><div class="gb" style="left:17px;top:774px;width:60px;height:60px"><svg width="58" height="58" viewBox="-29 -29 58 58" style="position:absolute;left:0;top:0"><path d="M5.5 -11 L-5.5 0 L5.5 11" fill="none" stroke="#00f0ff" stroke-width="3.8" stroke-linecap="round" stroke-linejoin="round"/></svg></div><div class="gb" style="left:150px;top:774px;width:60px;height:60px"><svg width="58" height="58" viewBox="-29 -29 58 58" style="position:absolute;left:0;top:0"><path d="M-5.5 -11 L5.5 0 L-5.5 11" fill="none" stroke="#00f0ff" stroke-width="3.8" stroke-linecap="round" stroke-linejoin="round"/></svg></div><div class="gb" style="left:83px;top:838px;width:60px;height:60px"><svg width="58" height="58" viewBox="-29 -29 58 58" style="position:absolute;left:0;top:0"><path d="M-11 -5.5 L0 5.5 L11 -5.5" fill="none" stroke="#00f0ff" stroke-width="3.8" stroke-linecap="round" stroke-linejoin="round"/></svg></div>
<div class="gb" style="left:223px;top:712px;width:60px;height:60px"><svg width="58" height="58" viewBox="-29 -29 58 58" style="position:absolute;left:0;top:0"><path d="M-11 5.5 L0 -5.5 L11 5.5" fill="none" stroke="#00f0ff" stroke-width="3.8" stroke-linecap="round" stroke-linejoin="round"/></svg></div><div class="gb" style="left:223px;top:838px;width:60px;height:60px"><svg width="58" height="58" viewBox="-29 -29 58 58" style="position:absolute;left:0;top:0"><path d="M-11 -5.5 L0 5.5 L11 -5.5" fill="none" stroke="#00f0ff" stroke-width="3.8" stroke-linecap="round" stroke-linejoin="round"/></svg></div>
<div class="gb" style="left:223px;top:774px;width:60px;height:60px"><span style="position:absolute;left:0;top:17px;width:58px;text-align:center;font-size:22px;line-height:24px;font-weight:bold;color:#00f0ff;letter-spacing:-1px">AF</span></div>
<div class="gb" style="left:17px;top:900px;width:60px;height:60px"><svg width="58" height="58" viewBox="-29 -29 58 58" style="position:absolute;left:0;top:0"><path d="M-11 5.5 L0 -5.5 L11 5.5" fill="none" stroke="#00f0ff" stroke-width="3.8" stroke-linecap="round" stroke-linejoin="round"/></svg></div><div class="gb" style="left:150px;top:900px;width:60px;height:60px"><svg width="58" height="58" viewBox="-29 -29 58 58" style="position:absolute;left:0;top:0"><path d="M-11 -5.5 L0 5.5 L11 -5.5" fill="none" stroke="#00f0ff" stroke-width="3.8" stroke-linecap="round" stroke-linejoin="round"/></svg></div>
<svg class="a" style="left:80px;top:775px" width="66" height="58" viewBox="80 775 66 58"><polygon points="105,793 133,793 140,809 97,809" fill="#c8c8c8"/><polygon points="97,809 140,809 140,815.5 97,815.5" fill="#8c8c8c"/><line x1="90.5" y1="803" x2="103" y2="782.5" stroke="#00f0ff" stroke-width="1.6" /><polygon points="103.00,782.50 102.57,788.60 97.78,785.67" fill="#00f0ff"/><polygon points="90.50,803.00 90.93,796.90 95.72,799.83" fill="#00f0ff"/><line x1="100" y1="823.5" x2="136" y2="823.5" stroke="#00f0ff" stroke-width="1.6" /><polygon points="136.00,823.50 130.57,826.31 130.57,820.69" fill="#00f0ff"/><polygon points="100.00,823.50 105.43,820.69 105.43,826.31" fill="#00f0ff"/></svg>
<svg class="a" style="left:80px;top:905px" width="66" height="50" viewBox="80 905 66 50"><defs><linearGradient id="rg" x1="0" y1="0" x2="0" y2="1"><stop offset="0" stop-color="#f0ecd0" stop-opacity="0.9"/><stop offset="1" stop-color="#2f2f2f" stop-opacity="0"/></linearGradient><filter id="bl"><feGaussianBlur stdDeviation="0.7"/></filter></defs><path d="M99.5 928 L104 944 H132 L138 928 Z" fill="url(#rg)"/><ellipse cx="118.5" cy="927.5" rx="18.5" ry="6.6" fill="none" stroke="#f6f0b8" stroke-width="4" filter="url(#bl)"/><ellipse cx="118.5" cy="927.5" rx="18.5" ry="6.6" fill="none" stroke="#fffff0" stroke-width="2.2"/><line x1="91.5" y1="912" x2="91.5" y2="946.5" stroke="#00f0ff" stroke-width="1.6" /><polygon points="91.50,946.50 88.57,940.84 94.43,940.84" fill="#00f0ff"/><polygon points="91.50,912.00 94.43,917.66 88.57,917.66" fill="#00f0ff"/></svg>
<div class="a" style="left:48px;top:979px;width:159px;height:35px;border-radius:5px;background:#262626"></div>
<div class="a" style="left:23px;top:990px;font-size:12px;line-height:16px;color:#f0f0f0">X</div>
<div class="a" style="left:60px;width:122px;top:978px;font-size:30px;line-height:35px;height:35px;text-align:right;color:#00f71c;white-space:nowrap">60.248</div>
<div class="a" style="left:234px;top:989px;font-size:14px;line-height:16px;color:#f0f0f0;letter-spacing:0.3px">mm</div>
<div class="a" style="left:48px;top:1023px;width:159px;height:35px;border-radius:5px;background:#262626"></div>
<div class="a" style="left:23px;top:1033px;font-size:12px;line-height:16px;color:#f0f0f0">Y</div>
<div class="a" style="left:60px;width:116.80000000000001px;top:1022px;font-size:30px;line-height:35px;height:35px;text-align:right;color:#00f71c;white-space:nowrap">5.435</div>
<div class="a" style="left:234px;top:1035px;font-size:14px;line-height:16px;color:#f0f0f0;letter-spacing:0.3px">mm</div>
<div class="a" style="left:48px;top:1065px;width:159px;height:35px;border-radius:5px;background:#262626"></div>
<div class="a" style="left:23px;top:1075px;font-size:12px;line-height:16px;color:#f0f0f0">Z</div>
<div class="a" style="left:60px;width:122px;top:1064px;font-size:30px;line-height:35px;height:35px;text-align:right;color:#00f71c;white-space:nowrap">68.456</div>
<div class="a" style="left:234px;top:1075px;font-size:14px;line-height:16px;color:#f0f0f0;letter-spacing:0.3px">mm</div>
<div class="gb" style="left:10px;top:1109px;width:85px;height:43px;line-height:41px;font-size:12px">新建测量</div>
<div class="gb" style="left:105px;top:1109px;width:85px;height:43px;line-height:41px;font-size:12px">图层控制</div>
<div class="gb" style="left:200px;top:1109px;width:85px;height:43px;line-height:41px;font-size:12px">对焦器</div>
<svg class="a" style="left:310px;top:133px" width="883" height="883" viewBox="310 133 883 883"><defs><linearGradient id="gfld" x1="0" y1="0" x2="1" y2="0"><stop offset="0" stop-color="#cecece"/><stop offset="1" stop-color="#cfcfcf"/></linearGradient><filter id="nz" x="0" y="0" width="100%" height="100%"><feTurbulence type="fractalNoise" baseFrequency="0.9" numOctaves="2" seed="3"/><feColorMatrix type="matrix" values="0 0 0 0 0  0 0 0 0 0  0 0 0 0 0  1.6 0 0 0 -0.45"/></filter><filter id="sp" x="0" y="0" width="100%" height="100%"><feTurbulence type="fractalNoise" baseFrequency="0.55" numOctaves="1" seed="11"/><feColorMatrix type="matrix" values="0 0 0 0 1  0 0 0 0 1  0 0 0 0 1  9 0 0 0 -6.9"/></filter><clipPath id="fov"><circle cx="575" cy="574" r="299"/><circle cx="925" cy="574" r="299"/></clipPath></defs><rect x="310" y="133" width="883" height="883" fill="#000"/><g id="drw"><clipPath id="band"><rect x="310" y="310" width="883" height="528.5"/></clipPath>
<g clip-path="url(#band)"><circle cx="575" cy="574" r="299" fill="url(#gfld)"/><circle cx="925" cy="574" r="299" fill="url(#gfld)"/><rect x="310" y="300" width="883" height="550" fill="#fff" filter="url(#sp)" clip-path="url(#fov)"/><rect x="310" y="300" width="883" height="550" fill="#000" filter="url(#nz)" opacity="0.055" clip-path="url(#fov)"/></g>
<g stroke="#a8a8a8" stroke-width="1" fill="none" opacity="0.8" clip-path="url(#band)"><path d="M425 397 Q450 375 470 352 M432 400 Q455 382 474 358 M440 395 L466 366"/><path d="M592 380 Q600 350 607 345 Q614 342 616 352 Q614 364 606 362"/><path d="M660 450 L735 375 M668 448 L728 384"/><path d="M725 345 Q735 340 748 348 Q755 360 745 375"/><path d="M1056 711 L1090 689 M981.6 705 L993 717 M1055 745 L1062 756"/><path d="M580 808 Q640 830 700 836 M860 775 L930 800"/></g>
<path d="M332.5 547 Q332 531 340 529.5 L411 523 Q425 521 431 507.6 L455 459 Q462 446 476 444 L542 439 Q562 438 578 442.4 A540 540 0 0 0 866 426.7 Q885 421 904 415.8 L982 411 Q995 411 1001 420.7 L1030 464 Q1038 479 1052 480.3 L1121.6 478 Q1133 478 1134 489 L1139 556 Q1140 567 1130 568.5 L1088 572.5 Q1081 574 1081 583.5 L1080.7 604 Q1080 612 1072.5 615.7 L1031.4 639 Q1019 646 1017.4 656.7 L1015 671.4 Q1013 684 1005 689 L996 695 A735 735 0 0 1 809.3 749.5 Q801 751 798 753 L791 760.7 Q787 765.5 783.4 766.3 L771.4 767.6 Q769.2 767.6 769.2 765.5 L768.4 748.6 L772.7 747 L772.7 744.3 L766 724.5 Q763 717 759 715 Q753 711 747 711 Q740 711 735 714 Q730 717 727.4 724.5 L722.7 746 L723 749.5 L727.8 752 L728.7 768 Q728.7 771 726.5 771 L714.5 771 Q709 769 705 765 L697.2 758.5 Q694 757 690 757 A730 730 0 0 1 493 726.5 Q478 718 470.7 697.8 Q466 686 456.6 681.7 L409.7 659.7 Q398 654 398 648 L396.5 626 Q396 618 387.7 617.8 L342 618.6 Q335.5 618 335 609 Z" fill="#050505"/>
<circle cx="504" cy="624" r="35" fill="#cdcdcd"/><circle cx="974.3" cy="593.7" r="35" fill="#cdcdcd"/>
<g fill="#222"><circle cx="783" cy="806" r="1.6"/><circle cx="1081" cy="651" r="1.2"/><circle cx="1121" cy="677" r="1.2"/><circle cx="1012" cy="709" r="1"/><circle cx="965" cy="714" r="1.5"/><circle cx="413" cy="739" r="0.8"/></g>
<g fill="none" stroke="#00f040" stroke-width="2.4"><path d="M578 443 A540 540 0 0 0 866 427.3"/><path d="M493 727.2 A730 730 0 0 0 690 757.6"/><path d="M809.3 750.2 A735 735 0 0 0 996 695.6"/><path d="M332.8 556 L335 601"/><path d="M1135.6 493 L1139 551"/><circle cx="974.3" cy="593.7" r="35"/></g>
<line x1="684.6" y1="133" x2="563.6" y2="841" stroke="#00f0ff" stroke-width="1.2"/>
<polygon points="577.6,748.0 578.6,761.4 572.3,760.3" fill="#00f0ff"/>
<line x1="722.5" y1="133" x2="784.9" y2="597" stroke="#00f0ff" stroke-width="1.2"/>
<polygon points="765.5,453.0 770.5,465.4 764.2,466.3" fill="#00f0ff"/>
<line x1="736" y1="133" x2="949.4" y2="838.5" stroke="#00f0ff" stroke-width="1.2"/>
<polygon points="914.2,727.0 921.0,738.5 914.8,740.4" fill="#00f0ff"/>
<line x1="322.5" y1="392.4" x2="1125" y2="341.5" stroke="#00f0ff" stroke-width="1.2"/>
<line x1="322.5" y1="392.4" x2="334" y2="580" stroke="#00f0ff" stroke-width="1.2"/>
<line x1="1125" y1="341.5" x2="1138.5" y2="551" stroke="#00f0ff" stroke-width="1.2"/>
<polygon points="322.5,392.4 340.3,388.1 340.7,394.5" fill="#00f0ff"/>
<polygon points="1125.0,341.5 1107.2,345.8 1106.8,339.4" fill="#00f0ff"/>
<line x1="504" y1="624" x2="510" y2="722.7" stroke="#00f0ff" stroke-width="1.2"/>
<line x1="974.3" y1="593.7" x2="980" y2="693.4" stroke="#00f0ff" stroke-width="1.2"/>
<line x1="510" y1="722.7" x2="980" y2="693.4" stroke="#00f0ff" stroke-width="1.2"/>
<polygon points="510.0,722.7 527.8,718.4 528.2,724.8" fill="#00f0ff"/>
<polygon points="980.0,693.4 962.2,697.7 961.8,691.3" fill="#00f0ff"/>
<line x1="461" y1="599" x2="581" y2="668" stroke="#00f0ff" stroke-width="1.2"/>
<polygon points="473.5,606.5 458.5,602.5 462.5,595.5" fill="#00f0ff"/>
<polygon points="534.5,641.5 549.5,645.5 545.5,652.5" fill="#00f0ff"/>
<line x1="919" y1="470.6" x2="979" y2="451" stroke="#00c8e8" stroke-width="1.2"/>
<line x1="991" y1="463" x2="1050" y2="443" stroke="#00c8e8" stroke-width="1.2"/>
<path d="M913 464.6 L925 476.6 M913 476.6 L925 464.6" stroke="#00f040" stroke-width="2.2" fill="none"/>
<path d="M985 457 L997 469 M985 469 L997 457" stroke="#00f040" stroke-width="2.2" fill="none"/>
<path d="M1036.0 379.6 H1047.0 L1041.5 389.5 Z" stroke="#00f040" stroke-width="1" fill="none"/>
<path d="M1098.0 417.6 H1109.0 L1103.5 427.5 Z" stroke="#00f040" stroke-width="1" fill="none"/>
<path d="M1052.2 447.1 H1063.2 L1057.7 457.0 Z" stroke="#00f040" stroke-width="1" fill="none"/>
<text x="408" y="381" font-size="15.6" fill="#00d200" font-family="Liberation Mono,monospace" letter-spacing="-0.45" transform="rotate(-3.6 408 381)">[D1] 136.746</text>
<text x="935" y="456" font-size="15.6" fill="#00d200" font-family="Liberation Mono,monospace" letter-spacing="-0.45">[H1] 8.643</text>
<text x="1007" y="447" font-size="15.6" fill="#00d200" font-family="Liberation Mono,monospace" letter-spacing="-0.45">[H2] 8.777</text>
<text x="540" y="641" font-size="15.6" fill="#00d200" font-family="Liberation Mono,monospace" letter-spacing="-0.45" transform="rotate(30 540 641)">[Φ1] 11.999</text>
<text x="686.5" y="706.8" font-size="15.6" fill="#00d200" font-family="Liberation Mono,monospace" letter-spacing="-0.45" transform="rotate(-3.6 686.5 706.8)">[G1] 79.990</text>
<text x="550.5" y="889.5" font-size="15.6" fill="#00d200" font-family="Liberation Mono,monospace" letter-spacing="-0.45" transform="rotate(-80.3 550.5 889.5)">[R1] 124.102</text>
<text x="779.5" y="547" font-size="15.6" fill="#00d200" font-family="Liberation Mono,monospace" letter-spacing="-0.45" transform="rotate(82 779.5 547)">[R3] 91.828</text>
<text x="939.5" y="785.5" font-size="15.6" fill="#00d200" font-family="Liberation Mono,monospace" letter-spacing="-0.45" transform="rotate(73.2 939.5 785.5)">[R2] 125.062</text></g><circle cx="504" cy="624" r="35" fill="none" stroke="#1010f0" stroke-width="2.6"/>
<rect x="499" y="619" width="10" height="10" fill="#d8c8d0" stroke="#8c1840" stroke-width="1.6"/><circle cx="504" cy="624" r="2" fill="#700010"/>
<text x="701.5" y="599" font-size="31.5" fill="#00d200" font-family="Liberation Mono,monospace" letter-spacing="-1">1:OK</text></svg>
<div class="a" style="left:310px;top:1023px;width:883px;height:102px;border:1px solid #5e5e5e"></div>
<div class="a" style="left:317px;top:1029.0px;font-size:13px;line-height:18px;height:18px;color:#f4f4f4;white-space:nowrap;letter-spacing:0.5px">准备就绪...</div>
<div class="a" style="left:317px;top:1047.5px;font-size:13px;line-height:18px;height:18px;color:#f4f4f4;white-space:nowrap;letter-spacing:0.5px">正在拍摄图片...</div>
<div class="a" style="left:317px;top:1066.0px;font-size:13px;line-height:18px;height:18px;color:#f4f4f4;white-space:nowrap;letter-spacing:0.5px">准备就绪...</div>
<div class="a" style="left:317px;top:1084.5px;font-size:13px;line-height:18px;height:18px;color:#f4f4f4;white-space:nowrap;letter-spacing:0.5px">保存成功...</div>
<div class="a" style="left:317px;top:1103.0px;font-size:13px;line-height:18px;height:18px;color:#f4f4f4;white-space:nowrap;letter-spacing:0.5px">准备就绪...</div>
<div class="a" style="left:310px;top:1130px;width:883px;height:30px;background:#3f3f3f;border-top:1px solid #262626"></div>
<div class="a" style="left:840px;top:1138px;font-size:12.5px;line-height:16px;color:#f0f0f0;white-space:nowrap">温度: 25.5 ℃</div>
<div class="a" style="left:918px;top:1140px;width:10px;height:10px;border-radius:5px;background:#00e838"></div>
<div class="a" style="left:942px;top:1138px;font-size:12.5px;line-height:16px;color:#f0f0f0;white-space:nowrap">帧率: 0.0fps</div>
<div class="a" style="left:1031px;top:1138px;font-size:12.5px;line-height:16px;color:#f0f0f0;white-space:nowrap">[763,1243]</div>
<div class="a" style="left:1111px;top:1138px;font-size:12.5px;line-height:16px;color:#f0f0f0;white-space:nowrap"><span style="font-size:12.2px">图层显示:全部</span></div>
<div class="a" style="left:1017px;top:1133px;width:1px;height:24px;background:#2a2a2a"></div><div class="a" style="left:1102px;top:1133px;width:1px;height:24px;background:#2a2a2a"></div>
<div class="flab" style="top:153px">工件型号</div><div class="inp" style="top:148px"></div>
<div class="flab" style="top:193px">工件名称</div><div class="inp" style="top:188px"></div>
<div class="flab" style="top:233px">工件识别码</div><div class="inp" style="top:228px"></div>
<div class="flab" style="top:273px">图纸编号</div><div class="inp" style="top:268px"></div>
<div class="flab" style="top:313px">检测员</div><div class="inp" style="top:308px"></div>
<div class="flab" style="top:353px">温度</div><div class="inp" style="top:348px"></div>
<div class="gb" style="left:1208px;top:492px;width:53px;height:35px;line-height:33px;font-size:12px">编辑</div>
<div class="gb" style="left:1269px;top:492px;width:53px;height:35px;line-height:33px;font-size:12px">保存</div>
<div class="gb" style="left:1330px;top:492px;width:53px;height:35px;line-height:33px;font-size:12px">删除</div>
<div class="gb" style="left:1391px;top:492px;width:53px;height:35px;line-height:33px;font-size:12px">结合</div>
<div class="gb" style="left:1452px;top:492px;width:53px;height:35px;line-height:33px;font-size:12px">卸载</div>
<svg class="a" style="left:1514px;top:134px" width="395" height="395" viewBox="310 133 883 883"><rect x="310" y="133" width="883" height="883" fill="#000"/><use href="#drw"/><circle cx="504" cy="624" r="35" fill="none" stroke="#00f040" stroke-width="2.6"/></svg>
<div class="a" style="left:1203px;top:540px;width:70px;height:26px;line-height:27px;text-align:center;font-size:12px;color:#d8d8d8;background:linear-gradient(#727272,#5e5e5e 40%,#525252 60%,#484848);border-radius:2px 2px 0 0">当前工件</div>
<div class="a" style="left:1273px;top:540px;width:70px;height:26px;line-height:25px;text-align:center;font-size:12px;color:#fff;background:linear-gradient(#333 0,#1c1c1c 25%,#000 42%);border:1px solid #222;border-bottom:none">过程统计</div>
<div class="a" style="left:1203px;top:566px;width:707px;height:319px;border:1px solid #585858;background:#303030"></div>
<div class="a mono" style="left:1208px;top:571px;width:697px;height:309px;overflow:hidden;background:#1e1e1e"><div class="tr" style="top:0;height:21px;background:#4f4f4f"><div class="th" style="left:0px;width:28.5px;border-right:1px solid #424242"></div><div class="th" style="left:28.5px;width:40px;border-right:1px solid #424242">ID</div><div class="th" style="left:68.5px;width:100px;border-right:1px solid #424242">特征名称</div><div class="th" style="left:168.5px;width:100px;border-right:1px solid #424242">测量值</div><div class="th" style="left:268.5px;width:100px;border-right:1px solid #424242">评定结果</div><div class="th" style="left:368.5px;width:100px;border-right:1px solid #424242">设计值</div><div class="th" style="left:468.5px;width:100px;border-right:1px solid #424242">上偏差</div><div class="th" style="left:568.5px;width:100px;border-right:1px solid #424242">下偏差</div><div class="th" style="left:668.5px;width:28.5px;border-right:1px solid #424242"></div><div class="cb"></div></div><div class="tr" style="top:21px;background:#363636"><div class="tc" style="left:0px;width:28.5px;border-right:1px solid #404040;"></div><div class="tc" style="left:28.5px;width:40px;border-right:1px solid #404040;">1-1</div><div class="tc g" style="left:68.5px;width:100px;border-right:1px solid #404040;"><span class="cj">直径</span>[Φ1]</div><div class="tc g" style="left:168.5px;width:100px;border-right:1px solid #404040;">11.999</div><div class="tc g" style="left:268.5px;width:100px;border-right:1px solid #404040;">OK</div><div class="tc" style="left:368.5px;width:100px;border-right:1px solid #404040;">12.000</div><div class="tc" style="left:468.5px;width:100px;border-right:1px solid #404040;">0.030</div><div class="tc" style="left:568.5px;width:100px;border-right:1px solid #404040;">-0.030</div><div class="tc" style="left:668.5px;width:28.5px;border-right:1px solid #404040;"></div><div class="cb"></div></div><div class="tr" style="top:41px;background:#292929"><div class="tc" style="left:0px;width:28.5px;border-right:1px solid #404040;"></div><div class="tc" style="left:28.5px;width:40px;border-right:1px solid #404040;">1-2</div><div class="tc g" style="left:68.5px;width:100px;border-right:1px solid #404040;"><span class="cj">对齐</span>[G1]</div><div class="tc g" style="left:168.5px;width:100px;border-right:1px solid #404040;">79.990</div><div class="tc g" style="left:268.5px;width:100px;border-right:1px solid #404040;">OK</div><div class="tc" style="left:368.5px;width:100px;border-right:1px solid #404040;">80.000</div><div class="tc" style="left:468.5px;width:100px;border-right:1px solid #404040;">0.030</div><div class="tc" style="left:568.5px;width:100px;border-right:1px solid #404040;">-0.030</div><div class="tc" style="left:668.5px;width:28.5px;border-right:1px solid #404040;"></div><div class="cb"></div></div><div class="tr" style="top:61px;background:#363636"><div class="tc" style="left:0px;width:28.5px;border-right:1px solid #404040;"></div><div class="tc" style="left:28.5px;width:40px;border-right:1px solid #404040;">1-3</div><div class="tc g" style="left:68.5px;width:100px;border-right:1px solid #404040;"><span class="cj">两线</span>[D1]</div><div class="tc g" style="left:168.5px;width:100px;border-right:1px solid #404040;">136.746</div><div class="tc g" style="left:268.5px;width:100px;border-right:1px solid #404040;">OK</div><div class="tc" style="left:368.5px;width:100px;border-right:1px solid #404040;">136.740</div><div class="tc" style="left:468.5px;width:100px;border-right:1px solid #404040;">0.030</div><div class="tc" style="left:568.5px;width:100px;border-right:1px solid #404040;">-0.030</div><div class="tc" style="left:668.5px;width:28.5px;border-right:1px solid #404040;"></div><div class="cb"></div></div><div class="tr" style="top:81px;background:#292929"><div class="tc" style="left:0px;width:28.5px;border-right:1px solid #404040;"></div><div class="tc" style="left:28.5px;width:40px;border-right:1px solid #404040;">1-4</div><div class="tc g" style="left:68.5px;width:100px;border-right:1px solid #404040;"><span class="cj">半径</span>[R1]</div><div class="tc g" style="left:168.5px;width:100px;border-right:1px solid #404040;">124.102</div><div class="tc g" style="left:268.5px;width:100px;border-right:1px solid #404040;">OK</div><div class="tc" style="left:368.5px;width:100px;border-right:1px solid #404040;">124.000</div><div class="tc" style="left:468.5px;width:100px;border-right:1px solid #404040;">0.500</div><div class="tc" style="left:568.5px;width:100px;border-right:1px solid #404040;">-0.500</div><div class="tc" style="left:668.5px;width:28.5px;border-right:1px solid #404040;"></div><div class="cb"></div></div><div class="tr" style="top:101px;background:#363636"><div class="tc" style="left:0px;width:28.5px;border-right:1px solid #404040;"></div><div class="tc" style="left:28.5px;width:40px;border-right:1px solid #404040;">1-5</div><div class="tc g" style="left:68.5px;width:100px;border-right:1px solid #404040;"><span class="cj">半径</span>[R2]</div><div class="tc g" style="left:168.5px;width:100px;border-right:1px solid #404040;">125.062</div><div class="tc g" style="left:268.5px;width:100px;border-right:1px solid #404040;">OK</div><div class="tc" style="left:368.5px;width:100px;border-right:1px solid #404040;">125.000</div><div class="tc" style="left:468.5px;width:100px;border-right:1px solid #404040;">0.500</div><div class="tc" style="left:568.5px;width:100px;border-right:1px solid #404040;">-0.500</div><div class="tc" style="left:668.5px;width:28.5px;border-right:1px solid #404040;"></div><div class="cb"></div></div><div class="tr" style="top:121px;background:#292929"><div class="tc" style="left:0px;width:28.5px;border-right:1px solid #404040;"></div><div class="tc" style="left:28.5px;width:40px;border-right:1px solid #404040;">1-6</div><div class="tc g" style="left:68.5px;width:100px;border-right:1px solid #404040;"><span class="cj">半径</span>[R3]</div><div class="tc g" style="left:168.5px;width:100px;border-right:1px solid #404040;">91.828</div><div class="tc g" style="left:268.5px;width:100px;border-right:1px solid #404040;">OK</div><div class="tc" style="left:368.5px;width:100px;border-right:1px solid #404040;">91.810</div><div class="tc" style="left:468.5px;width:100px;border-right:1px solid #404040;">0.030</div><div class="tc" style="left:568.5px;width:100px;border-right:1px solid #404040;">-0.030</div><div class="tc" style="left:668.5px;width:28.5px;border-right:1px solid #404040;"></div><div class="cb"></div></div><div class="tr" style="top:141px;background:#363636"><div class="tc" style="left:0px;width:28.5px;border-right:1px solid #404040;"></div><div class="tc" style="left:28.5px;width:40px;border-right:1px solid #404040;">1-7</div><div class="tc g" style="left:68.5px;width:100px;border-right:1px solid #404040;"><span class="cj">高度</span>[H1]</div><div class="tc g" style="left:168.5px;width:100px;border-right:1px solid #404040;">8.643</div><div class="tc g" style="left:268.5px;width:100px;border-right:1px solid #404040;">OK</div><div class="tc" style="left:368.5px;width:100px;border-right:1px solid #404040;">8.620</div><div class="tc" style="left:468.5px;width:100px;border-right:1px solid #404040;">0.030</div><div class="tc" style="left:568.5px;width:100px;border-right:1px solid #404040;">-0.030</div><div class="tc" style="left:668.5px;width:28.5px;border-right:1px solid #404040;"></div><div class="cb"></div></div><div class="tr" style="top:161px;background:#292929"><div class="tc" style="left:0px;width:28.5px;border-right:1px solid #404040;"></div><div class="tc" style="left:28.5px;width:40px;border-right:1px solid #404040;">1-8</div><div class="tc g" style="left:68.5px;width:100px;border-right:1px solid #404040;"><span class="cj">高度</span>[H2]</div><div class="tc g" style="left:168.5px;width:100px;border-right:1px solid #404040;">8.777</div><div class="tc g" style="left:268.5px;width:100px;border-right:1px solid #404040;">OK</div><div class="tc" style="left:368.5px;width:100px;border-right:1px solid #404040;">8.760</div><div class="tc" style="left:468.5px;width:100px;border-right:1px solid #404040;">0.030</div><div class="tc" style="left:568.5px;width:100px;border-right:1px solid #404040;">-0.030</div><div class="tc" style="left:668.5px;width:28.5px;border-right:1px solid #404040;"></div><div class="cb"></div></div><div class="tr" style="top:181px;background:#363636"><div class="tc" style="left:0px;width:28.5px;border-right:1px solid #404040;"></div><div class="tc" style="left:28.5px;width:40px;border-right:1px solid #404040;"></div><div class="tc" style="left:68.5px;width:100px;border-right:1px solid #404040;"></div><div class="tc" style="left:168.5px;width:100px;border-right:1px solid #404040;"></div><div class="tc" style="left:268.5px;width:100px;border-right:1px solid #404040;"></div><div class="tc" style="left:368.5px;width:100px;border-right:1px solid #404040;"></div><div class="tc" style="left:468.5px;width:100px;border-right:1px solid #404040;"></div><div class="tc" style="left:568.5px;width:100px;border-right:1px solid #404040;"></div><div class="tc" style="left:668.5px;width:28.5px;border-right:1px solid #404040;"></div></div><div class="tr" style="top:201px;background:#292929"><div class="tc" style="left:0px;width:28.5px;border-right:1px solid #404040;"></div><div class="tc" style="left:28.5px;width:40px;border-right:1px solid #404040;"></div><div class="tc" style="left:68.5px;width:100px;border-right:1px solid #404040;"></div><div class="tc" style="left:168.5px;width:100px;border-right:1px solid #404040;"></div><div class="tc" style="left:268.5px;width:100px;border-right:1px solid #404040;"></div><div class="tc" style="left:368.5px;width:100px;border-right:1px solid #404040;"></div><div class="tc" style="left:468.5px;width:100px;border-right:1px solid #404040;"></div><div class="tc" style="left:568.5px;width:100px;border-right:1px solid #404040;"></div><div class="tc" style="left:668.5px;width:28.5px;border-right:1px solid #404040;"></div></div><div class="tr" style="top:221px;background:#363636"><div class="tc" style="left:0px;width:28.5px;border-right:1px solid #404040;"></div><div class="tc" style="left:28.5px;width:40px;border-right:1px solid #404040;"></div><div class="tc" style="left:68.5px;width:100px;border-right:1px solid #404040;"></div><div class="tc" style="left:168.5px;width:100px;border-right:1px solid #404040;"></div><div class="tc" style="left:268.5px;width:100px;border-right:1px solid #404040;"></div><div class="tc" style="left:368.5px;width:100px;border-right:1px solid #404040;"></div><div class="tc" style="left:468.5px;width:100px;border-right:1px solid #404040;"></div><div class="tc" style="left:568.5px;width:100px;border-right:1px solid #404040;"></div><div class="tc" style="left:668.5px;width:28.5px;border-right:1px solid #404040;"></div></div><div class="tr" style="top:241px;background:#292929"><div class="tc" style="left:0px;width:28.5px;border-right:1px solid #404040;"></div><div class="tc" style="left:28.5px;width:40px;border-right:1px solid #404040;"></div><div class="tc" style="left:68.5px;width:100px;border-right:1px solid #404040;"></div><div class="tc" style="left:168.5px;width:100px;border-right:1px solid #404040;"></div><div class="tc" style="left:268.5px;width:100px;border-right:1px solid #404040;"></div><div class="tc" style="left:368.5px;width:100px;border-right:1px solid #404040;"></div><div class="tc" style="left:468.5px;width:100px;border-right:1px solid #404040;"></div><div class="tc" style="left:568.5px;width:100px;border-right:1px solid #404040;"></div><div class="tc" style="left:668.5px;width:28.5px;border-right:1px solid #404040;"></div></div><div class="tr" style="top:261px;background:#363636"><div class="tc" style="left:0px;width:28.5px;border-right:1px solid #404040;"></div><div class="tc" style="left:28.5px;width:40px;border-right:1px solid #404040;"></div><div class="tc" style="left:68.5px;width:100px;border-right:1px solid #404040;"></div><div class="tc" style="left:168.5px;width:100px;border-right:1px solid #404040;"></div><div class="tc" style="left:268.5px;width:100px;border-right:1px solid #404040;"></div><div class="tc" style="left:368.5px;width:100px;border-right:1px solid #404040;"></div><div class="tc" style="left:468.5px;width:100px;border-right:1px solid #404040;"></div><div class="tc" style="left:568.5px;width:100px;border-right:1px solid #404040;"></div><div class="tc" style="left:668.5px;width:28.5px;border-right:1px solid #404040;"></div></div><div class="tr" style="top:281px;background:#292929"><div class="tc" style="left:0px;width:28.5px;border-right:1px solid #404040;"></div><div class="tc" style="left:28.5px;width:40px;border-right:1px solid #404040;"></div><div class="tc" style="left:68.5px;width:100px;border-right:1px solid #404040;"></div><div class="tc" style="left:168.5px;width:100px;border-right:1px solid #404040;"></div><div class="tc" style="left:268.5px;width:100px;border-right:1px solid #404040;"></div><div class="tc" style="left:368.5px;width:100px;border-right:1px solid #404040;"></div><div class="tc" style="left:468.5px;width:100px;border-right:1px solid #404040;"></div><div class="tc" style="left:568.5px;width:100px;border-right:1px solid #404040;"></div><div class="tc" style="left:668.5px;width:28.5px;border-right:1px solid #404040;"></div></div><div class="tr" style="top:301px;background:#363636"><div class="tc" style="left:0px;width:28.5px;border-right:1px solid #404040;"></div><div class="tc" style="left:28.5px;width:40px;border-right:1px solid #404040;"></div><div class="tc" style="left:68.5px;width:100px;border-right:1px solid #404040;"></div><div class="tc" style="left:168.5px;width:100px;border-right:1px solid #404040;"></div><div class="tc" style="left:268.5px;width:100px;border-right:1px solid #404040;"></div><div class="tc" style="left:368.5px;width:100px;border-right:1px solid #404040;"></div><div class="tc" style="left:468.5px;width:100px;border-right:1px solid #404040;"></div><div class="tc" style="left:568.5px;width:100px;border-right:1px solid #404040;"></div><div class="tc" style="left:668.5px;width:28.5px;border-right:1px solid #404040;"></div></div></div>
<svg class="a" style="left:1203px;top:890px" width="707" height="260" viewBox="1203 890 707 260"><rect x="1203" y="890" width="707" height="260" fill="#505050"/><text x="1552" y="916" font-size="14" font-weight="bold" fill="#f4f4f4" text-anchor="middle" font-family="Liberation Mono,Noto Sans CJK SC,monospace" letter-spacing="1">直径[Φ1] 趋势图</text><rect x="1261.5" y="925.5" width="578" height="199" fill="none" stroke="#fff" stroke-width="1.2"/><text x="1252" y="932.6" font-size="11" fill="#f0f0f0" text-anchor="end" font-family="Liberation Mono,monospace" letter-spacing="-0.4">13.200</text><line x1="1255.5" y1="929.5" x2="1262" y2="929.5" stroke="#fff" stroke-width="1"/><text x="1252" y="971.6" font-size="11" fill="#f0f0f0" text-anchor="end" font-family="Liberation Mono,monospace" letter-spacing="-0.4">12.600</text><line x1="1255.5" y1="968.5" x2="1262" y2="968.5" stroke="#fff" stroke-width="1"/><text x="1252" y="1010.6" font-size="11" fill="#f0f0f0" text-anchor="end" font-family="Liberation Mono,monospace" letter-spacing="-0.4">12.000</text><line x1="1255.5" y1="1007.5" x2="1262" y2="1007.5" stroke="#fff" stroke-width="1"/><text x="1252" y="1049.6" font-size="11" fill="#f0f0f0" text-anchor="end" font-family="Liberation Mono,monospace" letter-spacing="-0.4">11.400</text><line x1="1255.5" y1="1046.5" x2="1262" y2="1046.5" stroke="#fff" stroke-width="1"/><text x="1252" y="1088.6" font-size="11" fill="#f0f0f0" text-anchor="end" font-family="Liberation Mono,monospace" letter-spacing="-0.4">10.800</text><line x1="1255.5" y1="1085.5" x2="1262" y2="1085.5" stroke="#fff" stroke-width="1"/><text x="1252" y="1127.6" font-size="11" fill="#f0f0f0" text-anchor="end" font-family="Liberation Mono,monospace" letter-spacing="-0.4">10.200</text><line x1="1255.5" y1="1124.5" x2="1262" y2="1124.5" stroke="#fff" stroke-width="1"/><line x1="1261.5" y1="1124" x2="1261.5" y2="1130" stroke="#fff" stroke-width="1"/><text x="1261.5" y="1143" font-size="11" fill="#f0f0f0" text-anchor="middle" font-family="Liberation Mono,monospace">0</text><line x1="1550.5" y1="1124" x2="1550.5" y2="1130" stroke="#fff" stroke-width="1"/><text x="1550.5" y="1143" font-size="11" fill="#f0f0f0" text-anchor="middle" font-family="Liberation Mono,monospace">1</text><line x1="1839.5" y1="1124" x2="1839.5" y2="1130" stroke="#fff" stroke-width="1"/><text x="1839.5" y="1143" font-size="11" fill="#f0f0f0" text-anchor="middle" font-family="Liberation Mono,monospace">2</text><line x1="1262" y1="1003.5" x2="1839" y2="1003.5" stroke="#ff6040" stroke-width="1.2"/><line x1="1262" y1="1005.3" x2="1839" y2="1005.3" stroke="#30b030" stroke-width="1.2"/><line x1="1262" y1="1007.5" x2="1839" y2="1007.5" stroke="#ff6040" stroke-width="1.2"/><circle cx="1550.3" cy="1005" r="2" fill="#00f0ff"/><text x="1842" y="1006" font-size="10" fill="#ff5030" font-family="Liberation Mono,monospace">USL:12.030</text><text x="1842" y="1008.5" font-size="10" fill="#38b038" font-family="Liberation Mono,monospace">CL:12.0000</text><text x="1842" y="1010" font-size="10" fill="#ff5030" font-family="Liberation Mono,monospace">LSL:11.970</text></svg>
</body></html>
